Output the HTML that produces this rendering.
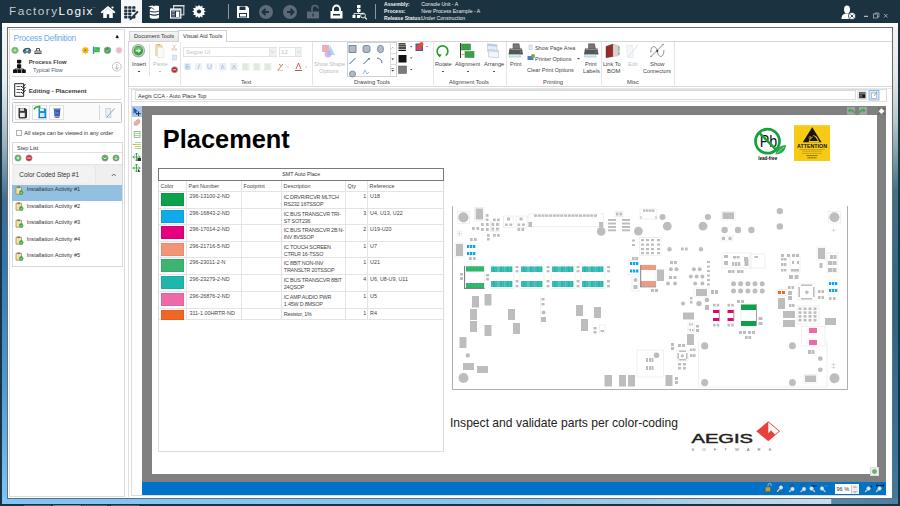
<!DOCTYPE html>
<html><head><meta charset="utf-8">
<style>
*{box-sizing:border-box;margin:0;padding:0}
html,body{width:900px;height:506px;overflow:hidden;background:#1b3241;font-family:"Liberation Sans",sans-serif;color:#222}
.a{position:absolute}
.t{position:absolute;white-space:nowrap;line-height:1}
svg{position:absolute;overflow:visible}
</style></head><body>
<div class="a" style="left:0;top:0;width:900px;height:506px">

<!-- ===== TITLE BAR ===== -->
<div class="t" style="left:9px;top:6.3px;font-size:11.8px;letter-spacing:1.45px;color:#c4cad0">Factory<span style="color:#fff">Logix</span></div>
<div class="t" style="left:92px;top:7px;font-size:2.5px;color:#7a8794">TM</div>
<div class="a" style="left:121px;top:0;width:21px;height:23px;background:#f4f6f8"></div>

<!-- ===== WINDOW FRAME ===== -->
<div class="a" style="left:2px;top:23px;width:896px;height:481px;background:linear-gradient(to bottom,#f4f6f8 0%,#e8eef2 12%,#9ab4c4 25%,#3d6d92 37%,#2e78b5 50%,#4a9ad8 75%,#7cc6f8 100%)"></div>
<div class="a" style="left:893px;top:23px;width:5px;height:481px;background:linear-gradient(to bottom,#f6f6f6 0%,#e0e6e6 12%,#b8cccc 20%,#3f7288 35%,#2a6585 60%,#3b7ca4 100%)"></div>
<div class="a" style="left:2px;top:498px;width:896px;height:6px;background:linear-gradient(to right,#7dc6f8 0%,#84c6f2 50%,#9ccbe8 70%,#c4def0 92.5%,#5589aa 92.6%,#4a80a3 100%)"></div>
<div class="a" style="left:2px;top:23px;width:896px;height:4px;background:#fff"></div>
<div class="a" style="left:24px;top:505px;width:27px;height:1px;background:#55606a"></div>
<div class="a" style="left:53px;top:505px;width:28px;height:1px;background:#7a858f"></div>
<div class="a" style="left:82px;top:505px;width:25px;height:1px;background:#55606a"></div>
<div class="a" style="left:111px;top:505px;width:28px;height:1px;background:#55606a"></div>
<!-- inner content -->
<div class="a" style="left:7px;top:27px;width:886px;height:472px;background:#fff;border:1px solid #6b6b6b"></div>


<!-- ===== LEFT PANEL ===== -->
<div class="a" style="left:9px;top:29px;width:116px;height:468px;border:1px solid #dcdcdc;background:#fff"></div>
<div class="a" style="left:127.5px;top:41px;width:1px;height:456px;background:#e0e0e0"></div>
<div class="t" style="left:13.6px;top:34px;font-size:8.3px;letter-spacing:-0.25px;color:#6aaae6">Process Definition</div>
<svg style="left:115px;top:34.5px" width="5" height="5"><path d="M1.2 0.6h2v1.8h0.8v0.7H0.4v-0.7h0.8z" fill="#111"/><path d="M2.2 3.1v1.2" stroke="#666" stroke-width="0.5"/></svg>
<!-- icon row -->
<svg style="left:11px;top:46px" width="115" height="9">
 <circle cx="4" cy="4.3" r="3.3" fill="#62b862" stroke="#b8b8b8" stroke-width="0.8"/><path d="M2.2 4.3h3.6M4 2.5v3.6" stroke="#d8f0d8" stroke-width="0.8"/>
 <path d="M12.5 5.5c0-2 2-3 3.5-2.5M16 3c1.5-1 3.5 0 3.5 2" stroke="#3a4a5a" stroke-width="1.5" fill="none"/><circle cx="14" cy="5.8" r="1.5" fill="#4a8ac8" stroke="#2a3a4a" stroke-width="0.6"/><circle cx="18" cy="5.8" r="1.5" fill="#4a8ac8" stroke="#2a3a4a" stroke-width="0.6"/>
 <path d="M23.5 7.5h7M24 7.5v-2.5h6v2.5M25.5 5v-2.5h3v2.5" stroke="#555" stroke-width="1" fill="none"/><rect x="24.5" y="5.5" width="5" height="1.5" fill="#aaa"/>
 <polygon points="78.10,4.30 76.89,5.37 76.99,6.99 75.37,6.89 74.30,8.10 73.23,6.89 71.61,6.99 71.71,5.37 70.50,4.30 71.71,3.23 71.61,1.61 73.23,1.71 74.30,0.50 75.37,1.71 76.99,1.61 76.89,3.23" fill="#f2b818"/><circle cx="74.3" cy="4.3" r="0.9" fill="#a07010"/>
 <path d="M82.5 0.5v7.5" stroke="#5a7ac8" stroke-width="1.3"/><path d="M83.2 1.2h5.5v5h-5.5z" fill="#2ab84a"/><path d="M83.5 2.5l4 2.5" stroke="#9f9" stroke-width="0.5"/>
 <circle cx="96.5" cy="4.3" r="3.3" fill="#3aa050" stroke="#a0a0a0" stroke-width="0.9"/><path d="M95 4.3l1.2 1.2 2-2.2" stroke="#cfc" stroke-width="0.7" fill="none"/>
 <circle cx="108" cy="4.3" r="3.1" fill="#f4b8c4" stroke="#e4e4e4" stroke-width="0.8"/>
</svg>
<!-- process flow -->
<svg style="left:13px;top:59px" width="14" height="15">
 <rect x="4" y="0.7" width="4.2" height="3.6" rx="0.5" fill="#111"/><rect x="4" y="5.3" width="4.2" height="3.6" rx="0.5" fill="#111"/>
 <path d="M6.1 4v1.5M6.1 8.8v1.5M2 11.2v-1.2h8.5v1.2" stroke="#111" stroke-width="0.9" fill="none"/>
 <rect x="0" y="10.4" width="4" height="3.6" rx="0.5" fill="#111"/><rect x="4.3" y="10.4" width="4" height="3.6" rx="0.5" fill="#111"/><rect x="8.8" y="10.4" width="4" height="3.6" rx="0.5" fill="#111"/>
</svg>
<div class="t" style="left:28.7px;top:60px;font-size:5.9px;font-weight:bold;color:#3a3a3a">Process Flow</div>
<div class="t" style="left:33px;top:68px;font-size:5.4px;color:#4a5a70">Typical Flow</div>
<svg style="left:111px;top:60.5px" width="12" height="12"><circle cx="5.8" cy="5.7" r="4.4" fill="none" stroke="#b0b0b0" stroke-width="0.75"/><path d="M5.8 3v5M3.7 6.5l2.1 1.8 2.1-1.8" stroke="#a0a0a0" stroke-width="0.75" fill="none"/></svg>
<div class="a" style="left:12px;top:76px;width:109px;height:1px;background:#d8d8d8"></div>
<!-- editing -->
<svg style="left:14px;top:83px" width="13" height="14">
 <path d="M0.7 0.7h9v12.6h-9z" fill="#fff" stroke="#222" stroke-width="1"/>
 <path d="M2.5 3.5h4M2.5 6.5h4M2.5 9.5h4" stroke="#333" stroke-width="0.8"/>
 <path d="M7 3l1.5 1.5 3-3.5M7 6l1.5 1.5 3-3.5M7 9l1.5 1.5 3-3.5" stroke="#111" stroke-width="1" fill="none"/>
</svg>
<div class="t" style="left:28.7px;top:87.7px;font-size:6.25px;font-weight:bold;color:#3a3a3a">Editing - Placement</div>
<div class="a" style="left:12px;top:99px;width:109px;height:1px;background:#d8d8d8"></div>
<!-- editing toolbar -->
<div class="a" style="left:11.5px;top:102px;width:110.5px;height:21px;border:1px solid #c4c4c4;border-radius:1.5px;background:#fafafa"></div>
<div class="a" style="left:15px;top:105px;width:15px;height:15px;border:1px solid #e2e2e2;background:#fff"></div>
<div class="a" style="left:32px;top:105px;width:15px;height:15px;border:1px solid #e2e2e2;background:#fff"></div>
<div class="a" style="left:49px;top:105px;width:15px;height:15px;border:1px solid #e2e2e2;background:#fff"></div>
<div class="a" style="left:99px;top:105px;width:1px;height:15px;background:#d8d8d8"></div>
<svg style="left:15px;top:105px" width="110" height="16">
 <path d="M3.5 3h6.5l1.5 1.2v8.5l-1 0.8H4.5l-1-1z" fill="#3a3a3a"/><rect x="5" y="3.3" width="4" height="2.6" fill="#d8d8d8"/><rect x="5" y="7.8" width="4.8" height="4.3" fill="#eee"/><path d="M11.5 4.2v8.5" stroke="#111" stroke-width="0.8"/>
 <path d="M23.5 3.2h6.5l1.2 1.2v8.5h-7.7z" fill="#1a8ad0"/><rect x="25" y="3.5" width="4" height="2.6" fill="#dff0fa"/><rect x="25" y="8" width="4.5" height="4" fill="#cfe6f4"/><path d="M23.5 12.9h7.7" stroke="#0a5a90" stroke-width="0.6"/>
 <path d="M19 4.5c1-2 3-3 5.5-2.5" stroke="#28a040" stroke-width="1.5" fill="none"/><path d="M23.8 0.3l2.2 1.8-2.2 1.8z" fill="#28a040"/>
 <path d="M38.8 3.5h6.6l-0.7 8.6c-0.3 0.6-1.5 0.9-2.6 0.9s-2.3-0.3-2.6-0.9z" fill="#3a5ab8"/><path d="M38.3 3.2h7.6v1.2h-7.6z" fill="#a8b0b8"/><path d="M40 6l1 3 1.5-2 1 2.5" stroke="#8ab0f0" stroke-width="0.5" fill="none"/><path d="M39.2 11.5h5.8" stroke="#b8c0c8" stroke-width="0.8"/>
 <path d="M90.5 3.5h5l0.5 9h-5z" fill="#e8f0f6" stroke="#9ab0c0" stroke-width="0.5"/><path d="M92 12l7.5-8.5" stroke="#8a9aa8" stroke-width="0.9"/>
</svg>
<!-- checkbox -->
<div class="a" style="left:16.3px;top:129.7px;width:6px;height:6px;border:1px solid #b0b0b0;background:#fff"></div>
<div class="t" style="left:24.3px;top:130.5px;font-size:5.55px;color:#333">All steps can be viewed in any order</div>
<!-- step list -->
<div class="a" style="left:11.5px;top:142px;width:111px;height:125px;border:1px solid #d8d8d8;background:#fff"></div>
<div class="t" style="left:17px;top:145.5px;font-size:5.5px;color:#333">Step List</div>
<div class="a" style="left:12px;top:152px;width:110px;height:1px;background:#e0e0e0"></div>
<svg style="left:14px;top:154px" width="108" height="9">
 <circle cx="4" cy="4" r="3.1" fill="#4caf50" stroke="#999" stroke-width="0.8"/><path d="M2.3 4h3.4M4 2.3v3.4" stroke="#fff" stroke-width="0.9"/>
 <circle cx="15" cy="4" r="3.1" fill="#d9243a" stroke="#999" stroke-width="0.8"/><path d="M13.3 4h3.4" stroke="#fff" stroke-width="0.9"/>
 <circle cx="91" cy="4" r="3.1" fill="#4caf50" stroke="#999" stroke-width="0.8"/><path d="M89.5 3.3l1.5 1.7 1.5-1.7" stroke="#fff" stroke-width="0.9" fill="none"/>
 <circle cx="102" cy="4" r="3.1" fill="#4caf50" stroke="#999" stroke-width="0.8"/><path d="M102 2.3v3M100.6 4.2l1.4 1.4 1.4-1.4" stroke="#fff" stroke-width="0.8" fill="none"/>
</svg>
<div class="a" style="left:12px;top:163.5px;width:110px;height:1px;background:#e4e4e4"></div>
<div class="a" style="left:12px;top:164.5px;width:110px;height:20px;background:#efefef"></div>
<div class="a" style="left:14px;top:166px;width:82px;height:16.5px;background:#f2f2f2;border-right:1px solid #e6e6e6"></div>
<div class="t" style="left:19.3px;top:171.5px;font-size:6.4px;color:#333">Color Coded Step #1</div>
<svg style="left:111px;top:173px" width="6" height="4"><path d="M0.8 3l2-2 2 2" stroke="#444" stroke-width="0.8" fill="none"/></svg>
<div class="a" style="left:12px;top:184.5px;width:110px;height:16.5px;background:#92c0e0"></div>
<svg style="left:14.5px;top:185.8px" width="9" height="9"><path d="M1 1.2h5.5v7H1z" fill="#f3e2b0" stroke="#a08040" stroke-width="0.7"/><rect x="2.4" y="0.5" width="2.6" height="1.6" fill="#777"/><circle cx="6.2" cy="6.5" r="2.2" fill="#3aa53a"/><path d="M5 6.5l.9.9 1.5-1.7" stroke="#fff" stroke-width="0.6" fill="none"/></svg>
<div class="t" style="left:26.7px;top:187.0px;font-size:5.6px;color:#333">Installation Activity #1</div>
<svg style="left:14.5px;top:202.4px" width="9" height="9"><path d="M1 1.2h5.5v7H1z" fill="#f3e2b0" stroke="#a08040" stroke-width="0.7"/><rect x="2.4" y="0.5" width="2.6" height="1.6" fill="#777"/><circle cx="6.2" cy="6.5" r="2.2" fill="#3aa53a"/><path d="M5 6.5l.9.9 1.5-1.7" stroke="#fff" stroke-width="0.6" fill="none"/></svg>
<div class="t" style="left:26.7px;top:203.6px;font-size:5.6px;color:#333">Installation Activity #2</div>
<svg style="left:14.5px;top:219.0px" width="9" height="9"><path d="M1 1.2h5.5v7H1z" fill="#f3e2b0" stroke="#a08040" stroke-width="0.7"/><rect x="2.4" y="0.5" width="2.6" height="1.6" fill="#777"/><circle cx="6.2" cy="6.5" r="2.2" fill="#3aa53a"/><path d="M5 6.5l.9.9 1.5-1.7" stroke="#fff" stroke-width="0.6" fill="none"/></svg>
<div class="t" style="left:26.7px;top:220.2px;font-size:5.6px;color:#333">Installation Activity #3</div>
<svg style="left:14.5px;top:235.6px" width="9" height="9"><path d="M1 1.2h5.5v7H1z" fill="#f3e2b0" stroke="#a08040" stroke-width="0.7"/><rect x="2.4" y="0.5" width="2.6" height="1.6" fill="#777"/><circle cx="6.2" cy="6.5" r="2.2" fill="#3aa53a"/><path d="M5 6.5l.9.9 1.5-1.7" stroke="#fff" stroke-width="0.6" fill="none"/></svg>
<div class="t" style="left:26.7px;top:236.8px;font-size:5.6px;color:#333">Installation Activity #4</div>
<svg style="left:14.5px;top:252.2px" width="9" height="9"><path d="M1 1.2h5.5v7H1z" fill="#f3e2b0" stroke="#a08040" stroke-width="0.7"/><rect x="2.4" y="0.5" width="2.6" height="1.6" fill="#777"/><circle cx="6.2" cy="6.5" r="2.2" fill="#3aa53a"/><path d="M5 6.5l.9.9 1.5-1.7" stroke="#fff" stroke-width="0.6" fill="none"/></svg>
<div class="t" style="left:26.7px;top:253.4px;font-size:5.6px;color:#333">Installation Activity #5</div>

<!-- ===== RIBBON ===== -->
<div class="a" style="left:129px;top:31px;width:49.5px;height:10.5px;border:1px solid #d4d4d4;border-bottom:none;background:linear-gradient(#f4f4f4,#e6e6e6)"></div>
<div class="t" style="left:134px;top:33.4px;font-size:6.2px;transform:scaleX(0.906);transform-origin:0 0;color:#333">Document Tools</div>
<div class="a" style="left:128px;top:41px;width:764px;height:46px;border:1px solid #d6d6d6;border-right:none;background:#fff"></div>
<div class="a" style="left:178px;top:30px;width:49px;height:12px;border:1px solid #d0d0d0;border-bottom:none;background:#fff"></div>
<div class="t" style="left:182.9px;top:33.4px;font-size:6.2px;transform:scaleX(0.909);transform-origin:0 0;color:#333">Visual Aid Tools</div>
<div class="a" style="left:128px;top:86px;width:764px;height:1px;background:#d9d9d9"></div>
<div class="a" style="left:128px;top:88px;width:764px;height:1px;background:#e6e6e6"></div>
<!-- separators -->
<div class="a" style="left:149px;top:44px;width:1px;height:32px;background:#e4e4e4"></div>
<div class="a" style="left:180px;top:42px;width:1px;height:43px;background:#e4e4e4"></div>
<div class="a" style="left:311.5px;top:42px;width:1px;height:43px;background:#e4e4e4"></div>
<div class="a" style="left:432.5px;top:42px;width:1px;height:43px;background:#e4e4e4"></div>
<div class="a" style="left:505.5px;top:42px;width:1px;height:43px;background:#e4e4e4"></div>
<div class="a" style="left:601px;top:42px;width:1px;height:43px;background:#e4e4e4"></div>
<div class="a" style="left:674px;top:42px;width:1px;height:43px;background:#e4e4e4"></div>
<!-- Insert / Paste -->
<svg style="left:131px;top:44px" width="50" height="30">
 <circle cx="7.4" cy="6.7" r="6.7" fill="#a4a4a4"/><circle cx="7.4" cy="6.7" r="5.9" fill="#c8c8c8"/><circle cx="7.4" cy="6.7" r="4.7" fill="#2fa83a"/><ellipse cx="7.4" cy="5" rx="3.2" ry="2" fill="#78d478" opacity="0.7"/>
 <path d="M4.6 6.8h3.2" stroke="#fff" stroke-width="1.3"/><path d="M7.3 4.6l2.8 2.2-2.8 2.2z" fill="#fff"/>
 <path d="M24.5 0.5h5.5l1.5 1.5v10h-7z" fill="#f0dca0" stroke="#e0c888" stroke-width="0.4"/><rect x="26" y="0" width="3" height="1.5" fill="#c8b8a0"/>
 <path d="M26.5 3.5h5.5l1 1v9h-6.5z" fill="#fafafa" stroke="#d8d8d8" stroke-width="0.5"/>
 <path d="M41.8 0.5l2.5 4M44.8 0.5l-2.5 4" stroke="#c8a0a0" stroke-width="0.5"/><circle cx="41.8" cy="5.5" r="0.9" fill="none" stroke="#d88" stroke-width="0.5"/><circle cx="44.8" cy="5.5" r="0.9" fill="none" stroke="#d88" stroke-width="0.5"/>
 <rect x="41.5" y="11" width="4" height="5" fill="#dde8f4" stroke="#b8cce0" stroke-width="0.5"/>
 <circle cx="43.5" cy="25.8" r="3" fill="#c8202f" stroke="#a0a0a0" stroke-width="0.9"/><path d="M42 25.8h3" stroke="#fff" stroke-width="0.8"/>
</svg>
<div class="t" style="left:132px;top:60.5px;font-size:6.2px;transform:scaleX(0.903);transform-origin:0 0;color:#333">Insert</div>
<div class="a" style="left:137.5px;top:70.5px;width:2px;height:1.5px;background:#444"></div>
<div class="t" style="left:153px;top:60.5px;font-size:6.2px;transform:scaleX(0.924);transform-origin:0 0;color:#bbb">Paste</div>
<div class="a" style="left:158.5px;top:70.5px;width:2px;height:1px;background:#bbb"></div>
<!-- Text group -->
<div class="a" style="left:183.3px;top:47.3px;width:93.7px;height:9.5px;border:1px solid #e2e2e2;background:#fff"></div>
<div class="a" style="left:268.5px;top:48px;width:8px;height:8px;background:#f0f0f0;border-left:1px solid #e6e6e6"></div>
<svg style="left:270px;top:50px" width="6" height="4"><path d="M0.8 0.8l2 2 2-2" stroke="#bbb" stroke-width="0.6" fill="none"/></svg>
<div class="t" style="left:185.5px;top:48.6px;font-size:6.2px;transform:scaleX(0.945);transform-origin:0 0;color:#c4c4c4">Segoe UI</div>
<div class="a" style="left:279px;top:47.3px;width:23px;height:9.5px;border:1px solid #e2e2e2;background:#fff"></div>
<div class="a" style="left:294.5px;top:48px;width:7px;height:8px;background:#f0f0f0;border-left:1px solid #e6e6e6"></div>
<svg style="left:295.5px;top:50px" width="6" height="4"><path d="M0.8 0.8l2 2 2-2" stroke="#c8c8c8" stroke-width="0.6" fill="none"/></svg>
<div class="t" style="left:281px;top:48.6px;font-size:6.2px;color:#c4c4c4">12</div>
<svg style="left:183px;top:62px" width="130" height="10">
 <rect x="1" y="1" width="7" height="7" fill="#e8f0f8"/><rect x="12" y="1" width="7" height="7" fill="#eef2f8"/><rect x="23" y="1" width="7" height="7" fill="#eef2f8"/>
 <path d="M3 2.5h2.5a1.2 1.2 0 010 2.2H3zM3 4.7h2.8a1.3 1.3 0 010 2.3H3z" stroke="#8fb0e0" stroke-width="0.6" fill="none"/>
 <path d="M16.5 2.5l-1.6 4.5" stroke="#8fb0e0" stroke-width="0.7"/><path d="M24.8 2.5v2.5a1.7 1.7 0 003.4 0v-2.5" stroke="#8fb0e0" stroke-width="0.7" fill="none"/>
 <path d="M33 1v7" stroke="#ddd" stroke-width="0.6"/>
 <rect x="36" y="1" width="7.5" height="7.5" fill="#e8eef6"/><rect x="47" y="1" width="7.5" height="7.5" fill="#e8eef6"/>
 <path d="M38 7l1.5-4 1.5 4" stroke="#aab" stroke-width="0.6" fill="none"/><path d="M49.5 7l1.5-4 1.5 4" stroke="#aab" stroke-width="0.6" fill="none"/>
 <rect x="59" y="1" width="7.5" height="7.5" fill="#eaf2e8"/><rect x="70" y="1" width="7.5" height="7.5" fill="#eaf2e8"/><rect x="81" y="1" width="7.5" height="7.5" fill="#eaf2e8"/>
 <path d="M60 3h5M60 5h4M60 7h5M71 3h5M72 5h3M71 7h5M82 3h5M83 5h4M82 7h5" stroke="#c8d8c0" stroke-width="0.6"/>
 <path d="M95 8l5-6M96 2l2 1.5" stroke="#e66" stroke-width="1"/><path d="M94 8.5h6" stroke="#aaa" stroke-width="0.6"/><path d="M104 5h2" stroke="#999" stroke-width="0.5"/>
 <path d="M113 7l2.5-6 2.5 6" stroke="#d33" stroke-width="0.8" fill="none"/><path d="M112 8.5h7" stroke="#777" stroke-width="1"/><path d="M122 5h2" stroke="#999" stroke-width="0.5"/>
</svg>
<div class="t" style="left:240.7px;top:79.4px;font-size:6.2px;transform:scaleX(0.920);transform-origin:0 0;color:#444">Text</div>
<!-- Show shape options -->
<svg style="left:321px;top:44px" width="16" height="14">
 <rect x="1" y="1" width="7" height="7" fill="#e88a9a" opacity="0.7"/><path d="M9 1l5 10h-8z" fill="#8ed4f0" opacity="0.8"/><circle cx="7" cy="10" r="3.5" fill="#c8a8e8" opacity="0.8"/>
</svg>
<div class="t" style="left:314px;top:61px;font-size:6.2px;transform:scaleX(0.885);transform-origin:0 0;color:#bbb">Show Shape</div>
<div class="t" style="left:318.5px;top:68.3px;font-size:6.2px;transform:scaleX(0.916);transform-origin:0 0;color:#bbb">Options</div>
<!-- Drawing tools gallery -->
<div class="a" style="left:346.5px;top:42px;width:50.5px;height:34.5px;border:1px solid #d0d0d0;background:#fff"></div>
<div class="a" style="left:389.5px;top:42px;width:1px;height:34px;background:#ddd"></div>
<div class="a" style="left:390px;top:53px;width:7px;height:1px;background:#ddd"></div>
<div class="a" style="left:390px;top:64px;width:7px;height:1px;background:#ddd"></div>
<svg style="left:347px;top:43px" width="60" height="34">
 <rect x="2" y="2.5" width="7" height="7" fill="#b9b9b9" stroke="#4a78b8" stroke-width="0.8"/>
 <rect x="16" y="2.5" width="7" height="7" rx="2" fill="#b9b9b9" stroke="#4a78b8" stroke-width="0.8"/>
 <ellipse cx="33.5" cy="6" rx="3" ry="3.8" fill="#b9b9b9" stroke="#4a78b8" stroke-width="0.7"/>
 <path d="M2.5 21l6-6" stroke="#2f62a8" stroke-width="1"/>
 <path d="M16.5 21l6-6" stroke="#2f62a8" stroke-width="1"/><path d="M21 16l2.2-1.2-1 2.2z" fill="#2f62a8"/>
 <path d="M30 15c2.5 0 5 2 5 5" stroke="#2f62a8" stroke-width="0.9" fill="none"/>
 <circle cx="5.5" cy="31" r="3" fill="#b9b9b9" stroke="#4a78b8" stroke-width="0.7"/>
 <path d="M16 31l2-4 2 4 2-2" stroke="#5a8ac8" stroke-width="0.6" fill="none"/>
 <path d="M44.5 5.5l1.2-1.2 1.2 1.2" stroke="#666" stroke-width="0.5" fill="none"/>
 <path d="M44.3 15.5h2.8l-1.4 1.6z" fill="#333"/><path d="M44.3 27h2.8l-1.4 1.6z" fill="#333"/><path d="M44.3 25.5h2.8" stroke="#333" stroke-width="0.5"/>
 <path d="M51.5 0.8h7M51.5 2.8h7.5M51.5 5h7.5M51.5 7.3h7.5" stroke="#111" stroke-width="1.3"/>
 <rect x="51.5" y="12" width="8" height="7.5" fill="#111"/><rect x="51.5" y="23" width="8" height="7.5" fill="#7a7a7a" stroke="#555" stroke-width="0.5"/>
</svg>
<svg style="left:410px;top:46px" width="20" height="30">
 <path d="M0 0.2h2.4l-1.2 1.3z" fill="#333"/><path d="M0 11.5h2.4l-1.2 1.3z" fill="#333"/><path d="M0 23h2.4l-1.2 1.3z" fill="#333"/>
 <rect x="5.5" y="-2.5" width="7.5" height="7.5" fill="#2f5fb8"/><rect x="6.5" y="-1.5" width="5.5" height="5.5" fill="#e04a3a"/><circle cx="11.5" cy="-2" r="2" fill="#e8503a"/>
 <path d="M16 0h2l-1 1z" fill="#444"/>
</svg>
<div class="t" style="left:354px;top:79.4px;font-size:6.2px;transform:scaleX(0.929);transform-origin:0 0;color:#444">Drawing Tools</div>
<!-- Alignment tools -->
<svg style="left:435px;top:43px" width="70" height="16">
 <path d="M10.8 12.6A5.4 5.4 0 1 0 4.2 12.6" stroke="#2aa02a" stroke-width="1.7" fill="none"/><path d="M2.2 11l2.4 3.6 2.2-3z" fill="#2aa02a"/>
 <path d="M25.5 0v15" stroke="#333" stroke-width="1"/><rect x="26.5" y="1" width="9" height="6" fill="#3aa04a" stroke="#2a7a3a" stroke-width="0.5"/><rect x="30" y="8.5" width="9" height="6" fill="#3aa04a" stroke="#2a7a3a" stroke-width="0.5"/>
 <path d="M26.5 11.5h3" stroke="#f0a020" stroke-width="1.2"/>
 <path d="M52.5 0.8l9.5 1v7.5l-9.5-1z" fill="#e4eef6" stroke="#a8b8c8" stroke-width="0.5"/><path d="M52.5 0.8l9.5 1v2l-9.5-1z" fill="#b8cce0"/><path d="M53.5 6.5l10 0.8v7.5l-10-0.8z" fill="#f0f6fa" stroke="#a8b8c8" stroke-width="0.5"/><path d="M53.5 6.5l10 0.8v2l-10-0.8z" fill="#c8d8e8"/>
</svg>
<div class="t" style="left:435px;top:60.5px;font-size:6.2px;transform:scaleX(0.918);transform-origin:0 0;color:#444">Rotate</div>
<div class="t" style="left:455.2px;top:60.5px;font-size:6.2px;transform:scaleX(0.913);transform-origin:0 0;color:#444">Alignment</div>
<div class="t" style="left:484px;top:60.5px;font-size:6.2px;transform:scaleX(0.919);transform-origin:0 0;color:#444">Arrange</div>
<div class="a" style="left:442px;top:70.5px;width:2px;height:1px;background:#555"></div>
<div class="a" style="left:466.5px;top:70.5px;width:2px;height:1px;background:#555"></div>
<div class="a" style="left:493px;top:70.5px;width:2px;height:1px;background:#555"></div>
<div class="t" style="left:449px;top:79.4px;font-size:6.2px;transform:scaleX(0.916);transform-origin:0 0;color:#444">Alignment Tools</div>
<!-- Printing -->
<svg style="left:508px;top:43px" width="95" height="16">
 <path d="M5 0.8h6l1 5H5z" fill="#777" stroke="#444" stroke-width="0.5"/><path d="M1.5 5.5h12.5l1 6H0.5z" fill="#555"/><path d="M2.5 6.5h11" stroke="#999" stroke-width="0.8"/><path d="M1.5 11.5h10l1.5 2.5H1z" fill="#d8ecf4" stroke="#8aa" stroke-width="0.5"/><circle cx="12.5" cy="9" r="0.8" fill="#4a8ad0"/>
 <rect x="21" y="2" width="3" height="4.5" fill="#e8f0fa" stroke="#9ab8d8" stroke-width="0.5"/>
 <rect x="19.5" y="13" width="6" height="4" fill="#5a7ab8"/><circle cx="25" cy="13" r="2" fill="#5ab850"/>
 <g transform="translate(75.5,0)"><path d="M5 0.8h6l1 5H5z" fill="#777" stroke="#444" stroke-width="0.5"/><path d="M1.5 5.5h12.5l1 6H0.5z" fill="#555"/><path d="M2.5 6.5h11" stroke="#999" stroke-width="0.8"/><path d="M1.5 11.5h10l1.5 2.5H1z" fill="#d8ecf4" stroke="#8aa" stroke-width="0.5"/><circle cx="12.5" cy="9" r="0.8" fill="#4a8ad0"/></g>
</svg>
<div class="t" style="left:510px;top:60.6px;font-size:6.2px;transform:scaleX(0.906);transform-origin:0 0;color:#444">Print</div>
<div class="t" style="left:535px;top:44.75px;font-size:6.2px;transform:scaleX(0.873);transform-origin:0 0;color:#444">Show Page Area</div>
<div class="t" style="left:535.2px;top:55.85px;font-size:6.2px;transform:scaleX(0.881);transform-origin:0 0;color:#444">Printer Options</div>
<svg style="left:577px;top:58px" width="4" height="3"><path d="M0 0h3l-1.5 1.5z" fill="#444"/></svg>
<div class="t" style="left:527px;top:66.95px;font-size:6.2px;transform:scaleX(0.897);transform-origin:0 0;color:#444">Clear Print Options</div>
<div class="t" style="left:584.5px;top:60.7px;font-size:6.2px;transform:scaleX(0.906);transform-origin:0 0;color:#444">Print</div>
<div class="t" style="left:583px;top:68.45px;font-size:6.2px;transform:scaleX(0.918);transform-origin:0 0;color:#444">Labels</div>
<div class="t" style="left:543px;top:79.4px;font-size:6.2px;transform:scaleX(0.954);transform-origin:0 0;color:#444">Printing</div>
<!-- Misc -->
<svg style="left:600px;top:40px" width="70" height="20">
 <path d="M6 6.5l7-2.5v12.5l-7 1.2z" fill="#9a2a2a" stroke="#6a1a1a" stroke-width="0.4"/>
 <path d="M13 4l5.5 1.5v10.5l-5.5 0.5z" fill="#d4d4d4" stroke="#aaa" stroke-width="0.3"/>
 <path d="M19 6.5v2" stroke="#d03030" stroke-width="0.9"/>
 <path d="M19 8.7v2" stroke="#30a040" stroke-width="0.9"/><path d="M19 10.9v1.8" stroke="#e09020" stroke-width="0.9"/><path d="M19 12.9v1.8" stroke="#3050d0" stroke-width="0.9"/>
 <path d="M26.5 5.5h6l1 12h-6z" fill="#f4f8fb" stroke="#d8e0e8" stroke-width="0.5"/><path d="M28 17l10-12" stroke="#dde2e6" stroke-width="1"/>
 <path d="M51 16.5L63 4.5" stroke="#666" stroke-width="0.8"/>
 <path d="M50.8 11.5c0-3 1.5-5 3-5s3 2 3.5 5c0.5 3 2 5 3.5 5s3-2 3-5" stroke="#777" stroke-width="0.8" fill="none"/>
 <circle cx="57.3" cy="11" r="1.1" fill="#333"/>
 <circle cx="50.8" cy="11.8" r="0.8" fill="#999"/><circle cx="63.8" cy="11" r="0.8" fill="#999"/>
 <circle cx="51" cy="16.5" r="0.8" fill="#888"/><circle cx="63" cy="4.5" r="0.8" fill="#888"/>
</svg>
<div class="t" style="left:603px;top:60.7px;font-size:6.2px;transform:scaleX(0.908);transform-origin:0 0;color:#444">Link To</div>
<div class="t" style="left:606.5px;top:68.45px;font-size:6.2px;transform:scaleX(0.957);transform-origin:0 0;color:#444">BOM</div>
<div class="t" style="left:628px;top:60.7px;font-size:6.2px;transform:scaleX(0.915);transform-origin:0 0;color:#c4c4c4">Edit</div>
<div class="t" style="left:650px;top:60.7px;font-size:6.2px;transform:scaleX(0.942);transform-origin:0 0;color:#444">Show</div>
<div class="t" style="left:643px;top:68.45px;font-size:6.2px;transform:scaleX(0.886);transform-origin:0 0;color:#444">Connectors</div>
<div class="t" style="left:627px;top:79.4px;font-size:6.2px;transform:scaleX(0.930);transform-origin:0 0;color:#444">Misc</div>

<!-- ===== DOC PANEL ===== -->
<div class="a" style="left:130.5px;top:88.5px;width:756px;height:407px;border:1px solid #dcdcdc;border-right:none;background:#fff"></div>
<div class="a" style="left:130.5px;top:88.5px;width:756px;height:13px;border:1px solid #dcdcdc;border-bottom:none"></div>
<div class="a" style="left:135.3px;top:90px;width:720.7px;height:10px;border:1px solid #dcdcdc;background:#fff"></div>
<div class="t" style="left:138px;top:92.5px;font-size:6.2px;transform:scaleX(0.892);transform-origin:0 0;color:#333">Aegis CCA - Auto Place Top</div>
<div class="a" style="left:131px;top:101px;width:755px;height:1px;background:#e2e2e2"></div>
<svg style="left:857px;top:90px" width="25" height="11">
 <rect x="0.8" y="0.3" width="9" height="9.5" fill="#e8e8e8" stroke="#d8d8d8" stroke-width="0.5"/>
 <rect x="2" y="2.2" width="6.5" height="6" fill="#444"/><path d="M2.5 3.5h5.5M2.5 5.8h2.5" stroke="#999" stroke-width="0.6"/><rect x="5.5" y="5" width="2.5" height="2.5" fill="#111"/>
 <rect x="12" y="0.5" width="10" height="9.5" fill="#d4e6f8" stroke="#7ab0e0" stroke-width="0.8"/>
 <rect x="14.5" y="3" width="5" height="5.5" fill="#fff" stroke="#889" stroke-width="0.5"/><path d="M17 6l3-4" stroke="#666" stroke-width="0.6"/>
</svg>
<!-- left toolbox -->
<div class="a" style="left:131.5px;top:106px;width:10px;height:10.5px;background:#a6c8ec"></div>
<svg style="left:132px;top:106px" width="10" height="68">
 <path d="M1.5 1.5l4.5 3.8-2.2 0.4 1.6 2.4-1 0.6-1.5-2.4-1.4 1.5z" fill="#2050a8"/><path d="M6.5 5.5v4.5M4.3 7.7h4.5" stroke="#222" stroke-width="0.9"/>
 <ellipse cx="5" cy="16.5" rx="2.2" ry="3.6" transform="rotate(45 5 16.5)" fill="#e8b0a0" stroke="#c89080" stroke-width="0.4"/>
 <rect x="2.2" y="25.5" width="5.8" height="6" fill="none" stroke="#6cc06c" stroke-width="0.8"/><path d="M2.2 27.5h5.8M2.2 29.5h5.8" stroke="#6cc06c" stroke-width="0.6"/>
 <path d="M3 36.5h6M3 38.5h6M3 40.5h6M3 42.5h6" stroke="#9cd060" stroke-width="0.8"/><path d="M0.8 38.5h2.5" stroke="#f0a030" stroke-width="1"/>
 <path d="M4.5 47v8M0.8 51h7.5M3 48.5l1.5-1.5 1.5 1.5M3 53.5l1.5 1.5 1.5-1.5M2.3 49.5l-1.5 1.5 1.5 1.5M6.7 49.5l1.5 1.5-1.5 1.5" stroke="#2a9a3a" stroke-width="0.8" fill="none"/><rect x="5.5" y="52" width="3.5" height="3" fill="#333"/>
 <path d="M4.5 58v8M0.8 62h7.5M3 59.5l1.5-1.5 1.5 1.5M3 64.5l1.5 1.5 1.5-1.5M2.3 60.5l-1.5 1.5 1.5 1.5M6.7 60.5l1.5 1.5-1.5 1.5" stroke="#2a9a3a" stroke-width="0.8" fill="none"/><path d="M6 63l2.5 2.5-2.5 0.5z" fill="#333"/>
</svg>
<!-- canvas -->
<div class="a" style="left:142.3px;top:105.6px;width:744px;height:376.7px;background:#808080"></div>
<div class="a" style="left:151.8px;top:114.6px;width:725.5px;height:359.2px;background:#fff"></div>
<svg style="left:846px;top:106px" width="40" height="12">
 <rect x="1" y="1" width="8" height="7.8" fill="#a4a4a4"/><rect x="13" y="1" width="8" height="7.8" fill="#a4a4a4"/>
 <path d="M3.5 4.3c2-0.5 4 0.3 4.8 3" stroke="#45a855" stroke-width="1.5" fill="none"/><path d="M1.5 4.5l3-2.3v4.6z" fill="#45a855"/>
 <path d="M18 4.3c-2-0.5-4 0.3-4.8 3" stroke="#45a855" stroke-width="1.5" fill="none"/><path d="M20 4.5l-3-2.3v4.6z" fill="#45a855"/>
 <rect x="33.5" y="3.2" width="4" height="4" fill="#fff" transform="rotate(45 35.5 5.2)"/><path d="M32.2 1.8l1.3 1.3M38.8 1.8l-1.3 1.3M32.2 8.6l1.3-1.3M38.8 8.6l-1.3-1.3" stroke="#222" stroke-width="0.7"/>
</svg>
<div class="a" style="left:870.2px;top:466.5px;width:8.6px;height:9px;background:#efefef;border:1px solid #ddd"></div>
<svg style="left:871px;top:467.5px" width="7" height="7"><circle cx="3.5" cy="3.5" r="2.2" fill="#5cb85c" stroke="#999" stroke-width="0.5"/></svg>
<!-- status bar -->
<div class="a" style="left:142.3px;top:482.3px;width:744px;height:12.3px;background:#0073c8"></div>
<svg style="left:760px;top:480px" width="130" height="15">
 <path d="M8 6.5v-1.5a1.6 1.6 0 013.2 0v1" stroke="#c8c8c8" stroke-width="0.8" fill="none"/><rect x="5.2" y="7" width="5.2" height="4.6" fill="#c89a30" stroke="#6a5020" stroke-width="0.4"/>
 <rect x="15.8" y="5" width="7.5" height="7.5" fill="none" stroke="#1a4a80" stroke-width="0.5" stroke-dasharray="0.8 0.8"/>
 <path d="M21 7.5L17.5 11.2" stroke="#e8c88a" stroke-width="1.3" stroke-linecap="round"/><circle cx="21" cy="7.5" r="1.9" fill="#dfe8f0" stroke="#9aa" stroke-width="0.4"/>
 <text x="29.5" y="6.8" font-family="Liberation Sans" font-size="2.6" fill="#333">100</text><path d="M32.5 9L29.5 11.5" stroke="#e8c88a" stroke-width="1.3" stroke-linecap="round"/><circle cx="32.5" cy="9" r="1.9" fill="#dfe8f0" stroke="#9aa" stroke-width="0.4"/>
 <text x="41" y="6.8" font-family="Liberation Sans" font-size="2.6" fill="#333">1:1</text><path d="M44 9L41 11.5" stroke="#e8c88a" stroke-width="1.3" stroke-linecap="round"/><circle cx="44" cy="9" r="1.9" fill="#dfe8f0" stroke="#9aa" stroke-width="0.4"/>
 <path d="M51 6h6" stroke="#111" stroke-width="0.9"/><path d="M51.5 8.5L54.5 11.5" stroke="#e8c88a" stroke-width="1.3" stroke-linecap="round"/><circle cx="51.5" cy="8.5" r="1.9" fill="#dfe8f0" stroke="#9aa" stroke-width="0.4"/>
 <path d="M64.5 6h3" stroke="#8aa" stroke-width="0.6"/><path d="M62 8.5L65 11.5" stroke="#e8c88a" stroke-width="1.3" stroke-linecap="round"/><circle cx="62" cy="8.5" r="1.9" fill="#dfe8f0" stroke="#9aa" stroke-width="0.4"/>
 <path d="M110 6.5h3M111.5 5v3" stroke="#334" stroke-width="0.7"/><path d="M108.5 8.5L105.5 11.5" stroke="#e8c88a" stroke-width="1.3" stroke-linecap="round"/><circle cx="108.5" cy="8.5" r="1.9" fill="#dfe8f0" stroke="#9aa" stroke-width="0.4"/>
 <path d="M116 5.5h8M117.3 4.3l-1.3 1.2 1.3 1.2M122.7 4.3l1.3 1.2-1.3 1.2" stroke="#111" stroke-width="0.8" fill="none"/><path d="M119.5 8.5L116.5 11.5" stroke="#e8c88a" stroke-width="1.3" stroke-linecap="round"/><circle cx="119.5" cy="8.5" r="1.9" fill="#dfe8f0" stroke="#9aa" stroke-width="0.4"/>
</svg>
<div class="a" style="left:835px;top:484px;width:24px;height:10px;background:#fff"></div>
<div class="t" style="left:836.5px;top:486.5px;font-size:5.6px;color:#333">96 %</div>
<div class="a" style="left:851px;top:484.5px;width:7px;height:9px;background:#eee;border-left:1px solid #ccc"></div>
<svg style="left:852px;top:485px" width="6" height="9"><path d="M1.5 3l1.5-1.5 1.5 1.5M1.5 6l1.5 1.5 1.5-1.5" stroke="#555" stroke-width="0.6" fill="none"/></svg>

<!-- ===== TITLE ICONS ===== -->
<svg style="left:100px;top:4px" width="120" height="16">
 <!-- home -->
 <path d="M1.8 8.2L8 3.2l6.3 5" stroke="#fff" stroke-width="1.8" fill="none" stroke-linecap="round"/><path d="M3.2 8v6h3.6v-3.8h2.4v3.8h3.6V8L8 4.5z" fill="#fff"/><circle cx="12.5" cy="3.5" r="1.1" fill="#fff"/>
 <!-- grid pen -->
 <rect x="24.2" y="2.2" width="3.2" height="2.6" rx="0.6" fill="#1b3241"/><rect x="24.2" y="5.4" width="3.2" height="2.6" rx="0.6" fill="#1b3241"/><rect x="24.2" y="8.6" width="3.2" height="2.6" rx="0.6" fill="#1b3241"/><rect x="24.2" y="11.8" width="3.2" height="2.6" rx="0.6" fill="#1b3241"/><rect x="28.2" y="2.2" width="3.2" height="2.6" rx="0.6" fill="#1b3241"/><rect x="28.2" y="5.4" width="3.2" height="2.6" rx="0.6" fill="#1b3241"/><rect x="28.2" y="8.6" width="3.2" height="2.6" rx="0.6" fill="#1b3241"/><rect x="28.2" y="11.8" width="3.2" height="2.6" rx="0.6" fill="#1b3241"/><rect x="32.2" y="2.2" width="3.2" height="2.6" rx="0.6" fill="#1b3241"/><rect x="32.2" y="5.4" width="3.2" height="2.6" rx="0.6" fill="#1b3241"/><rect x="32.2" y="11.8" width="3.2" height="2.6" rx="0.6" fill="#1b3241"/><path d="M30 14.5l7.2-7.8 1.4 1.3-7.2 7.8-1.8 0.5z" fill="#1b3241"/>
 <!-- database -->
 <g transform="translate(49,1)"><path d="M0.8 9.8c1.2 0.6 2.8 0.9 4.6 0.9s3.4-0.3 4.6-0.9v2.6c0 0.8-2 1.3-4.6 1.3s-4.6-0.5-4.6-1.3z" fill="#fff"/><path d="M0.8 6.6c1.2 0.6 2.8 0.9 4.6 0.9s3.4-0.3 4.6-0.9v2.2c-1.2 0.5-2.8 0.8-4.6 0.8s-3.4-0.3-4.6-0.8z" fill="#fff"/>
 <path d="M5.5 1c1.5-0.4 3-0.4 4.5 0v4.8c-1.2 0.5-2.8 0.8-4.6 0.8-1.5 0-3-0.3-4.6-0.8v-1.5z" fill="#fff"/><path d="M-0.8 1.2l4.8-0.8 0.8 1.3 1.6-1.5 0.3 4.2-2.6-1z" fill="#fff"/><path d="M1.8 2.2l3.6 2.3" stroke="#1b3241" stroke-width="0.7"/></g>
 <!-- windows -->
 <g transform="translate(70,1)"><rect x="3.6" y="0.6" width="10.2" height="9.2" fill="none" stroke="#c8ccd0" stroke-width="1.2"/><rect x="3" y="0" width="11.4" height="1.4" fill="#d8dcdf"/><rect x="0.6" y="4" width="10.2" height="9" fill="#1b3241" stroke="#fff" stroke-width="1.2"/><rect x="0.6" y="4" width="10.2" height="1.6" fill="#e0e3e6"/><path d="M2 6.5h3M2 8h3M2 9.5h3M2 11h3" stroke="#aab" stroke-width="0.8"/><rect x="6" y="6.5" width="3.3" height="5.5" fill="#fff"/></g>
 <!-- gear -->
 <polygon points="99.00,0.70 100.27,2.77 102.40,1.61 102.46,4.04 104.89,4.10 103.73,6.23 105.80,7.50 103.73,8.77 104.89,10.90 102.46,10.96 102.40,13.39 100.27,12.23 99.00,14.30 97.73,12.23 95.60,13.39 95.54,10.96 93.11,10.90 94.27,8.77 92.20,7.50 94.27,6.23 93.11,4.10 95.54,4.04 95.60,1.61 97.73,2.77" fill="#fff"/><circle cx="99" cy="7.5" r="4.9" fill="#fff"/><circle cx="99" cy="7.5" r="2.1" fill="#1b3241"/>
</svg>
<div class="a" style="left:227.5px;top:4px;width:1px;height:15px;background:#8a98a6"></div>
<div class="a" style="left:374.5px;top:4px;width:1px;height:15px;background:#8a98a6"></div>
<svg style="left:236px;top:5px" width="135" height="15">
 <!-- save -->
 <path d="M1 1h10l2 2v10H1z" fill="#fff"/><rect x="3.5" y="1.5" width="6" height="3.5" fill="#1b3241"/><rect x="3" y="8" width="8" height="4.5" fill="#1b3241"/><rect x="4" y="9" width="6" height="2.5" fill="#fff"/>
 <!-- back -->
 <circle cx="30" cy="7" r="7" fill="#5d6a77"/><path d="M27 7h6M29.5 4l-3 3 3 3" stroke="#1b3241" stroke-width="2" fill="none"/>
 <circle cx="54" cy="7" r="7" fill="#5d6a77"/><path d="M51 7h6M54.5 4l3 3-3 3" stroke="#1b3241" stroke-width="2" fill="none"/>
 <!-- unlock -->
 <path d="M76 6V3.5a3 3 0 016 0" stroke="#5d6a77" stroke-width="1.6" fill="none"/><rect x="71" y="6.5" width="12" height="7" fill="#5d6a77"/><rect x="76.5" y="8.5" width="1.2" height="3" fill="#1b3241"/>
 <!-- lock -->
 <path d="M97 6V4a3.5 3.5 0 017 0v2" stroke="#fff" stroke-width="1.8" fill="none"/><rect x="94.5" y="6" width="12" height="7.5" fill="#fff"/><rect x="97" y="9" width="7" height="1.5" fill="#1b3241"/>
 <!-- process search -->
 <rect x="121" y="0" width="3.5" height="3" fill="#fff"/><rect x="121" y="4" width="3.5" height="3" fill="#fff"/><path d="M122.7 3v1M122.7 7v1.5M118 10v-1.5h9v1.5" stroke="#fff" stroke-width="0.8" fill="none"/>
 <rect x="116.5" y="10" width="3" height="3" fill="#fff"/><rect x="121" y="10" width="3" height="3" fill="#fff"/>
 <circle cx="127" cy="10.5" r="2.4" fill="none" stroke="#fff" stroke-width="0.9"/><path d="M128.8 12.3l2 2" stroke="#fff" stroke-width="1.2"/>
</svg>
<div class="t" style="left:384px;top:1.1px;font-size:5.1px;font-weight:bold;color:#f0f0f0;line-height:7px">Assembly:<br>Process:<br>Release Status:</div>
<div class="t" style="left:421.3px;top:1.1px;font-size:5.1px;color:#f0f0f0;line-height:7px">Console Unit - A<br>New Process Example - A<br>Under Construction</div>
<svg style="left:840px;top:5px" width="52" height="16">
 <ellipse cx="7" cy="4.5" rx="3" ry="4" fill="#fff"/><path d="M1.5 14c0-4 2-5.5 5.5-5.5s5.5 1.5 5.5 5.5z" fill="#fff"/>
 <circle cx="12" cy="11" r="3.6" fill="#fff" stroke="#1b3241" stroke-width="0.8"/><path d="M10.5 9.5l3 3M13.5 9.5l-3 3" stroke="#1b3241" stroke-width="0.9"/>
 <path d="M24 11.3h4" stroke="#fff" stroke-width="0.8"/>
 <rect x="33.5" y="9" width="4" height="4" fill="none" stroke="#bbb" stroke-width="0.7"/><path d="M35 9V8h4v4h-1.5" stroke="#bbb" stroke-width="0.7" fill="none"/>
 <path d="M44 9l3.5 3.5M47.5 9L44 12.5" stroke="#ccc" stroke-width="0.7"/>
</svg>

<!-- ===== PAGE CONTENT ===== -->
<div class="t" style="left:162.8px;top:126.6px;font-size:25.4px;font-weight:bold;color:#000;letter-spacing:0px">Placement</div>
<div class="a" style="left:158px;top:168px;width:286px;height:284px;border:1px solid #dcdcdc"></div>
<div class="a" style="left:158px;top:168px;width:286px;height:13px;border:1px solid #7a7a7a;background:#fff"></div>
<div class="t" style="left:282.3px;top:171.8px;font-size:5.3px;color:#333">SMT Auto Place</div>
<div class="a" style="left:159px;top:191px;width:284px;height:1px;background:#e4e4e4"></div>
<div class="a" style="left:159px;top:208px;width:284px;height:1px;background:#e4e4e4"></div>
<div class="a" style="left:159px;top:224px;width:284px;height:1px;background:#e4e4e4"></div>
<div class="a" style="left:159px;top:241px;width:284px;height:1px;background:#e4e4e4"></div>
<div class="a" style="left:159px;top:257px;width:284px;height:1px;background:#e4e4e4"></div>
<div class="a" style="left:159px;top:274px;width:284px;height:1px;background:#e4e4e4"></div>
<div class="a" style="left:159px;top:291px;width:284px;height:1px;background:#e4e4e4"></div>
<div class="a" style="left:159px;top:308px;width:284px;height:1px;background:#e4e4e4"></div>
<div class="a" style="left:159px;top:319px;width:284px;height:1px;background:#e4e4e4"></div>
<div class="a" style="left:186px;top:181px;width:1px;height:138px;background:#e4e4e4"></div>
<div class="a" style="left:241px;top:181px;width:1px;height:138px;background:#e4e4e4"></div>
<div class="a" style="left:281px;top:181px;width:1px;height:138px;background:#e4e4e4"></div>
<div class="a" style="left:345px;top:181px;width:1px;height:138px;background:#e4e4e4"></div>
<div class="a" style="left:367px;top:181px;width:1px;height:138px;background:#e4e4e4"></div>
<div class="t" style="left:160.6px;top:183.9px;font-size:5.4px;color:#454545">Color</div>
<div class="t" style="left:188.6px;top:183.9px;font-size:5.4px;color:#454545">Part Number</div>
<div class="t" style="left:243.6px;top:183.9px;font-size:5.4px;color:#454545">Footprint</div>
<div class="t" style="left:283.6px;top:183.9px;font-size:5.4px;color:#454545">Description</div>
<div class="t" style="left:347.6px;top:183.9px;font-size:5.4px;color:#454545">Qty</div>
<div class="t" style="left:369.6px;top:183.9px;font-size:5.4px;color:#454545">Reference</div>
<div class="a" style="left:161.2px;top:193.1px;width:22.5px;height:13.4px;background:#0ca14a;box-shadow:inset 0 0 0 0.5px rgba(0,0,0,0.12)"></div>
<div class="t" style="left:189.5px;top:194.2px;font-size:5.4px;color:#454545">296-13100-2-ND</div>
<div class="t" style="left:283.8px;top:194.2px;font-size:5.4px;color:#454545;line-height:7.1px;letter-spacing:-0.2px">IC DRVR/RCVR MLTCH<br>RS232 16TSSOP</div>
<div class="t" style="left:360px;width:6.3px;text-align:right;top:194.2px;font-size:5.4px;color:#454545">1</div>
<div class="t" style="left:370px;top:194.2px;font-size:5.4px;color:#454545">U18</div>
<div class="a" style="left:161.2px;top:210.1px;width:22.5px;height:13.4px;background:#0eaaea;box-shadow:inset 0 0 0 0.5px rgba(0,0,0,0.12)"></div>
<div class="t" style="left:189.5px;top:211.2px;font-size:5.4px;color:#454545">296-16843-2-ND</div>
<div class="t" style="left:283.8px;top:211.2px;font-size:5.4px;color:#454545;line-height:7.1px;letter-spacing:-0.2px">IC BUS TRANSCVR TRI-<br>ST SOT236</div>
<div class="t" style="left:360px;width:6.3px;text-align:right;top:211.2px;font-size:5.4px;color:#454545">3</div>
<div class="t" style="left:370px;top:211.2px;font-size:5.4px;color:#454545">U4, U13, U22</div>
<div class="a" style="left:161.2px;top:226.1px;width:22.5px;height:13.4px;background:#e5007d;box-shadow:inset 0 0 0 0.5px rgba(0,0,0,0.12)"></div>
<div class="t" style="left:189.5px;top:227.2px;font-size:5.4px;color:#454545">296-17014-2-ND</div>
<div class="t" style="left:283.8px;top:227.2px;font-size:5.4px;color:#454545;line-height:7.1px;letter-spacing:-0.2px">IC BUS TRANSCVR 2B N-<br>INV 8VSSOP</div>
<div class="t" style="left:360px;width:6.3px;text-align:right;top:227.2px;font-size:5.4px;color:#454545">2</div>
<div class="t" style="left:370px;top:227.2px;font-size:5.4px;color:#454545">U19-U20</div>
<div class="a" style="left:161.2px;top:243.1px;width:22.5px;height:13.4px;background:#f39477;box-shadow:inset 0 0 0 0.5px rgba(0,0,0,0.12)"></div>
<div class="t" style="left:189.5px;top:244.2px;font-size:5.4px;color:#454545">296-21716-5-ND</div>
<div class="t" style="left:283.8px;top:244.2px;font-size:5.4px;color:#454545;line-height:7.1px;letter-spacing:-0.2px">IC TOUCH SCREEN<br>CTRLR 16-TSSO</div>
<div class="t" style="left:360px;width:6.3px;text-align:right;top:244.2px;font-size:5.4px;color:#454545">1</div>
<div class="t" style="left:370px;top:244.2px;font-size:5.4px;color:#454545">U7</div>
<div class="a" style="left:161.2px;top:259.1px;width:22.5px;height:13.4px;background:#3db571;box-shadow:inset 0 0 0 0.5px rgba(0,0,0,0.12)"></div>
<div class="t" style="left:189.5px;top:260.2px;font-size:5.4px;color:#454545">296-23011-2-N</div>
<div class="t" style="left:283.8px;top:260.2px;font-size:5.4px;color:#454545;line-height:7.1px;letter-spacing:-0.2px">IC 8BIT NON-INV<br>TRANSLTR 20TSSOP</div>
<div class="t" style="left:360px;width:6.3px;text-align:right;top:260.2px;font-size:5.4px;color:#454545">1</div>
<div class="t" style="left:370px;top:260.2px;font-size:5.4px;color:#454545">U21</div>
<div class="a" style="left:161.2px;top:276.1px;width:22.5px;height:13.4px;background:#1db7ad;box-shadow:inset 0 0 0 0.5px rgba(0,0,0,0.12)"></div>
<div class="t" style="left:189.5px;top:277.2px;font-size:5.4px;color:#454545">296-23279-2-ND</div>
<div class="t" style="left:283.8px;top:277.2px;font-size:5.4px;color:#454545;line-height:7.1px;letter-spacing:-0.2px">IC BUS TRANSCVR 8BIT<br>24QSOP</div>
<div class="t" style="left:360px;width:6.3px;text-align:right;top:277.2px;font-size:5.4px;color:#454545">4</div>
<div class="t" style="left:370px;top:277.2px;font-size:5.4px;color:#454545">U6, U8-U9, U11</div>
<div class="a" style="left:161.2px;top:293.1px;width:22.5px;height:13.4px;background:#ee6aa7;box-shadow:inset 0 0 0 0.5px rgba(0,0,0,0.12)"></div>
<div class="t" style="left:189.5px;top:294.2px;font-size:5.4px;color:#454545">296-26876-2-ND</div>
<div class="t" style="left:283.8px;top:294.2px;font-size:5.4px;color:#454545;line-height:7.1px;letter-spacing:-0.2px">IC AMP AUDIO PWR<br>1.45W D 8MSOP</div>
<div class="t" style="left:360px;width:6.3px;text-align:right;top:294.2px;font-size:5.4px;color:#454545">1</div>
<div class="t" style="left:370px;top:294.2px;font-size:5.4px;color:#454545">U5</div>
<div class="a" style="left:161.2px;top:310.1px;width:22.5px;height:9.5px;background:#f26522;box-shadow:inset 0 0 0 0.5px rgba(0,0,0,0.12)"></div>
<div class="t" style="left:189.5px;top:311.2px;font-size:5.4px;color:#454545">311-1.00HRTR-ND</div>
<div class="t" style="left:283.8px;top:311.2px;font-size:5.4px;color:#454545;line-height:7.1px;letter-spacing:-0.2px">Resistor, 1%</div>
<div class="t" style="left:360px;width:6.3px;text-align:right;top:311.2px;font-size:5.4px;color:#454545">1</div>
<div class="t" style="left:370px;top:311.2px;font-size:5.4px;color:#454545">R4</div>
<div class="t" style="left:450px;top:416.8px;font-size:12.1px;color:#222">Inspect and validate parts per color-coding</div>

<!-- logos -->
<svg style="left:750px;top:120px" width="90" height="45">
 <circle cx="17.5" cy="21.2" r="12" fill="none" stroke="#13a23c" stroke-width="2.7"/>
 <text x="9.8" y="27.4" font-family="Liberation Sans" font-size="17" fill="#111" textLength="17.5" lengthAdjust="spacingAndGlyphs">Pb</text>
 <path d="M8.8 12.3L26.5 30.2" stroke="#13a23c" stroke-width="2.5"/>
 <path d="M25.5 34.5c0.5-6 4.5-9.5 10.5-9.5-0.5 6-4.5 9.5-10.5 9.5z" fill="#2aa84a"/><path d="M26.5 33.5l7.5-6.5" stroke="#e8f8e8" stroke-width="0.5"/>
 <text x="8.2" y="39.6" font-family="Liberation Sans" font-size="4.8" font-weight="bold" fill="#000" textLength="19" lengthAdjust="spacingAndGlyphs">lead-free</text>
 <rect x="44" y="5.2" width="36" height="35.8" fill="#f7cb15"/>
 <path d="M62.2 7.2L52.8 22.2h18.8z" fill="#151515"/>
 <path d="M58.5 22.2l2-5.5 1.8 1 1.2-2.8 3.2 1.8 2.8 5.5z" fill="#f7cb15"/>
 <path d="M59.5 21l1.4-3.8 1.5 0.8 1-2.2 2.2 1.4 2.3 3.8z" fill="#151515"/>
 <circle cx="60.2" cy="17.8" r="1.3" fill="none" stroke="#f7cb15" stroke-width="0.5"/>
 <text x="62" y="27.5" text-anchor="middle" font-family="Liberation Sans" font-size="4.5" font-weight="bold" fill="#111" textLength="30" lengthAdjust="spacingAndGlyphs">ATTENTION</text>
 <path d="M49.5 29.6h25M52.5 31.2h19" stroke="#6a5a10" stroke-width="0.45" stroke-dasharray="1.2 0.4"/>
 <path d="M52 33.4h20" stroke="#6a5a10" stroke-width="0.45" stroke-dasharray="1 0.3"/>
 <path d="M56.5 35.6h11M57.5 37.8h9" stroke="#3a3000" stroke-width="0.7" stroke-dasharray="1.3 0.3"/>
</svg>
<!-- AEGIS logo -->
<svg style="left:688px;top:418px" width="100" height="36">
 <text x="3.5" y="24.7" font-family="Liberation Sans" font-size="12.9" fill="#231f20" stroke="#231f20" stroke-width="0.45" textLength="61.5" lengthAdjust="spacingAndGlyphs">AEGIS</text>
 <text x="3.5" y="32.5" font-family="Liberation Sans" font-size="4.2" fill="#6d6e71" textLength="80" lengthAdjust="spacing">SOFTWARE</text>
 <path d="M68.3 13.3L80.3 3.3 92 13.3 80.3 23.3z" fill="#e8403a"/>
 <path d="M80.3 4.3L90.8 13.3 87 16.5 83 12.3 80.3 15.5z" fill="#fff"/>
</svg>

<!-- PCB -->
<svg style="left:452px;top:203px" width="400" height="190">
<rect x="5.5" y="8.5" width="12.0" height="12.0" fill="none" stroke="#e6e6e6" stroke-width="0.6"/>
<rect x="22.5" y="4.5" width="9.5" height="13.5" fill="none" stroke="#e6e6e6" stroke-width="0.6"/>
<rect x="38.5" y="19.0" width="9.0" height="9.5" fill="none" stroke="#e6e6e6" stroke-width="0.6"/>
<rect x="51.5" y="13.0" width="10.3" height="11.4" fill="none" stroke="#e6e6e6" stroke-width="0.6"/>
<rect x="64.0" y="13.0" width="11.0" height="11.4" fill="none" stroke="#e6e6e6" stroke-width="0.6"/>
<rect x="76.0" y="11.0" width="75.7" height="12.8" fill="none" stroke="#e6e6e6" stroke-width="0.6"/>
<rect x="163.0" y="8.5" width="8.0" height="5.0" fill="none" stroke="#e6e6e6" stroke-width="0.6"/>
<rect x="188.0" y="6.0" width="17.0" height="10.0" fill="none" stroke="#e6e6e6" stroke-width="0.6"/>
<rect x="269.5" y="8.5" width="13.5" height="8.5" fill="none" stroke="#e6e6e6" stroke-width="0.6"/>
<rect x="269.0" y="33.0" width="12.0" height="5.0" fill="none" stroke="#e6e6e6" stroke-width="0.6"/>
<rect x="376.5" y="8.5" width="12.0" height="11.5" fill="none" stroke="#e6e6e6" stroke-width="0.6"/>
<rect x="5.0" y="28.0" width="5.0" height="5.0" fill="none" stroke="#e6e6e6" stroke-width="0.6"/>
<rect x="187.5" y="34.5" width="21.5" height="18.0" fill="none" stroke="#e6e6e6" stroke-width="0.6"/>
<rect x="3.0" y="40.0" width="9.0" height="14.0" fill="none" stroke="#e6e6e6" stroke-width="0.6"/>
<rect x="12.4" y="63.0" width="20.1" height="22.6" fill="none" stroke="#e6e6e6" stroke-width="0.6"/>
<rect x="38.0" y="62.0" width="24.0" height="23.5" fill="none" stroke="#e6e6e6" stroke-width="0.6"/>
<rect x="68.0" y="62.0" width="24.0" height="23.5" fill="none" stroke="#e6e6e6" stroke-width="0.6"/>
<rect x="99.0" y="62.0" width="24.0" height="23.5" fill="none" stroke="#e6e6e6" stroke-width="0.6"/>
<rect x="129.0" y="62.0" width="24.0" height="23.5" fill="none" stroke="#e6e6e6" stroke-width="0.6"/>
<rect x="176.0" y="57.5" width="11.0" height="14.0" fill="none" stroke="#e6e6e6" stroke-width="0.6"/>
<rect x="180.0" y="73.5" width="7.0" height="14.5" fill="none" stroke="#e6e6e6" stroke-width="0.6"/>
<rect x="188.5" y="62.0" width="15.5" height="22.0" fill="none" stroke="#e6e6e6" stroke-width="0.6"/>
<rect x="242.0" y="85.0" width="15.0" height="9.0" fill="none" stroke="#e6e6e6" stroke-width="0.6"/>
<rect x="298.0" y="51.0" width="15.0" height="14.0" fill="none" stroke="#e6e6e6" stroke-width="0.6"/>
<rect x="270.0" y="50.0" width="29.0" height="15.0" fill="none" stroke="#e6e6e6" stroke-width="0.6"/>
<rect x="338.0" y="53.0" width="10.0" height="16.0" fill="none" stroke="#e6e6e6" stroke-width="0.6"/>
<rect x="365.0" y="44.0" width="9.0" height="13.0" fill="none" stroke="#e6e6e6" stroke-width="0.6"/>
<rect x="375.0" y="50.0" width="11.0" height="20.0" fill="none" stroke="#e6e6e6" stroke-width="0.6"/>
<rect x="325.0" y="86.5" width="10.0" height="6.0" fill="none" stroke="#e6e6e6" stroke-width="0.6"/>
<rect x="346.0" y="81.0" width="17.0" height="16.0" fill="none" stroke="#e6e6e6" stroke-width="0.6"/>
<rect x="376.0" y="77.0" width="11.0" height="15.0" fill="none" stroke="#e6e6e6" stroke-width="0.6"/>
<rect x="345.0" y="103.0" width="22.0" height="18.0" fill="none" stroke="#e6e6e6" stroke-width="0.6"/>
<rect x="147.5" y="122.0" width="5.5" height="8.0" fill="none" stroke="#e6e6e6" stroke-width="0.6"/>
<rect x="185.0" y="147.0" width="26.5" height="27.0" fill="none" stroke="#e6e6e6" stroke-width="0.6"/>
<rect x="225.0" y="147.0" width="11.0" height="11.0" fill="none" stroke="#e6e6e6" stroke-width="0.6"/>
<rect x="236.0" y="119.5" width="6.5" height="9.5" fill="none" stroke="#e6e6e6" stroke-width="0.6"/>
<rect x="289.0" y="101.0" width="15.5" height="22.0" fill="none" stroke="#e6e6e6" stroke-width="0.6"/>
<rect x="349.5" y="123.5" width="23.5" height="19.5" fill="none" stroke="#e6e6e6" stroke-width="0.6"/>
<rect x="352.0" y="171.5" width="13.0" height="8.5" fill="none" stroke="#e6e6e6" stroke-width="0.6"/>
<rect x="23.7" y="5.5" width="7.3" height="11.0" fill="#bdbdbd"/>
<rect x="33.8" y="11.0" width="2.7" height="2.8" fill="#bdbdbd"/>
<rect x="33.8" y="15.5" width="2.7" height="2.5" fill="#bdbdbd"/>
<rect x="41.0" y="15.5" width="2.7" height="2.5" fill="#bdbdbd"/>
<rect x="45.0" y="15.5" width="2.7" height="2.5" fill="#bdbdbd"/>
<rect x="29.0" y="20.0" width="2.7" height="3.0" fill="#bdbdbd"/>
<rect x="34.0" y="20.0" width="2.7" height="3.0" fill="#bdbdbd"/>
<rect x="29.0" y="25.0" width="2.7" height="3.0" fill="#bdbdbd"/>
<rect x="34.0" y="25.0" width="2.7" height="3.0" fill="#bdbdbd"/>
<rect x="39.5" y="20.0" width="2.7" height="3.0" fill="#bdbdbd"/>
<rect x="44.0" y="20.0" width="2.7" height="3.0" fill="#bdbdbd"/>
<rect x="39.5" y="24.5" width="2.7" height="3.0" fill="#bdbdbd"/>
<rect x="44.0" y="24.5" width="2.7" height="3.0" fill="#bdbdbd"/>
<rect x="20.0" y="24.0" width="2.7" height="3.0" fill="#bdbdbd"/>
<rect x="24.5" y="24.0" width="2.7" height="3.0" fill="#bdbdbd"/>
<rect x="35.0" y="31.0" width="2.7" height="2.8" fill="#bdbdbd"/>
<rect x="41.0" y="31.0" width="2.7" height="2.8" fill="#bdbdbd"/>
<rect x="45.0" y="31.0" width="2.7" height="2.8" fill="#bdbdbd"/>
<rect x="35.0" y="35.0" width="2.7" height="2.5" fill="#bdbdbd"/>
<rect x="18.0" y="35.0" width="2.7" height="3.0" fill="#bdbdbd"/>
<rect x="22.0" y="35.0" width="2.7" height="3.0" fill="#bdbdbd"/>
<rect x="55.0" y="14.5" width="3.0" height="3.0" fill="#bdbdbd"/>
<rect x="53.0" y="20.5" width="2.7" height="2.5" fill="#bdbdbd"/>
<rect x="57.5" y="20.5" width="2.7" height="2.5" fill="#bdbdbd"/>
<rect x="67.5" y="14.5" width="3.0" height="3.0" fill="#bdbdbd"/>
<rect x="65.5" y="20.5" width="2.7" height="2.5" fill="#bdbdbd"/>
<rect x="70.0" y="20.5" width="2.7" height="2.5" fill="#bdbdbd"/>
<rect x="65.5" y="25.0" width="2.7" height="3.0" fill="#bdbdbd"/>
<rect x="69.5" y="25.0" width="2.7" height="3.0" fill="#bdbdbd"/>
<rect x="82.0" y="11.5" width="3.0" height="2.3" fill="#bdbdbd"/>
<rect x="85.8" y="11.5" width="3.0" height="2.3" fill="#bdbdbd"/>
<rect x="89.5" y="11.5" width="3.0" height="2.3" fill="#bdbdbd"/>
<rect x="93.2" y="11.5" width="3.0" height="2.3" fill="#bdbdbd"/>
<rect x="97.0" y="11.5" width="3.0" height="2.3" fill="#bdbdbd"/>
<rect x="100.8" y="11.5" width="3.0" height="2.3" fill="#bdbdbd"/>
<rect x="104.5" y="11.5" width="3.0" height="2.3" fill="#bdbdbd"/>
<rect x="108.2" y="11.5" width="3.0" height="2.3" fill="#bdbdbd"/>
<rect x="112.0" y="11.5" width="3.0" height="2.3" fill="#bdbdbd"/>
<rect x="115.8" y="11.5" width="3.0" height="2.3" fill="#bdbdbd"/>
<rect x="119.5" y="11.5" width="3.0" height="2.3" fill="#bdbdbd"/>
<rect x="123.2" y="11.5" width="3.0" height="2.3" fill="#bdbdbd"/>
<rect x="127.0" y="11.5" width="3.0" height="2.3" fill="#bdbdbd"/>
<rect x="130.8" y="11.5" width="3.0" height="2.3" fill="#bdbdbd"/>
<rect x="134.5" y="11.5" width="3.0" height="2.3" fill="#bdbdbd"/>
<rect x="138.2" y="11.5" width="3.0" height="2.3" fill="#bdbdbd"/>
<rect x="142.0" y="11.5" width="3.0" height="2.3" fill="#bdbdbd"/>
<rect x="76.5" y="19.0" width="3.5" height="5.0" fill="#bdbdbd"/>
<rect x="147.0" y="19.0" width="4.0" height="5.0" fill="#bdbdbd"/>
<rect x="156.0" y="16.0" width="8.0" height="2.0" fill="#bdbdbd"/>
<rect x="170.0" y="16.0" width="8.0" height="2.0" fill="#bdbdbd"/>
<rect x="156.0" y="19.5" width="8.0" height="2.0" fill="#bdbdbd"/>
<rect x="170.0" y="19.5" width="8.0" height="2.0" fill="#bdbdbd"/>
<rect x="156.0" y="23.0" width="8.0" height="2.0" fill="#bdbdbd"/>
<rect x="170.0" y="23.0" width="8.0" height="2.0" fill="#bdbdbd"/>
<rect x="156.0" y="26.3" width="8.0" height="2.0" fill="#bdbdbd"/>
<rect x="170.0" y="26.3" width="8.0" height="2.0" fill="#bdbdbd"/>
<rect x="164.0" y="9.5" width="2.5" height="3.0" fill="#bdbdbd"/>
<rect x="167.5" y="9.5" width="2.5" height="3.0" fill="#bdbdbd"/>
<rect x="191.0" y="6.5" width="2.5" height="2.3" fill="#bdbdbd"/>
<rect x="194.0" y="6.5" width="2.5" height="2.3" fill="#bdbdbd"/>
<rect x="197.0" y="6.5" width="2.5" height="2.3" fill="#bdbdbd"/>
<rect x="200.0" y="6.5" width="2.5" height="2.3" fill="#bdbdbd"/>
<rect x="188.5" y="13.0" width="1.0" height="3.0" fill="#bdbdbd"/>
<rect x="203.5" y="13.0" width="1.0" height="3.0" fill="#bdbdbd"/>
<rect x="270.6" y="9.4" width="11.4" height="6.6" fill="#bdbdbd"/>
<rect x="270.0" y="34.0" width="3.0" height="3.0" fill="#bdbdbd"/>
<rect x="276.5" y="34.0" width="3.0" height="3.0" fill="#bdbdbd"/>
<rect x="180.0" y="36.5" width="3.0" height="2.0" fill="#bdbdbd"/>
<rect x="180.0" y="41.0" width="3.0" height="2.0" fill="#bdbdbd"/>
<rect x="189.0" y="36.0" width="3.0" height="2.2" fill="#bdbdbd"/>
<rect x="194.0" y="36.0" width="3.0" height="2.2" fill="#bdbdbd"/>
<rect x="199.0" y="36.0" width="3.0" height="2.2" fill="#bdbdbd"/>
<rect x="205.0" y="36.0" width="3.0" height="2.2" fill="#bdbdbd"/>
<rect x="189.0" y="40.5" width="3.0" height="2.2" fill="#bdbdbd"/>
<rect x="194.0" y="40.5" width="3.0" height="2.2" fill="#bdbdbd"/>
<rect x="199.0" y="40.5" width="3.0" height="2.2" fill="#bdbdbd"/>
<rect x="205.0" y="40.5" width="3.0" height="2.2" fill="#bdbdbd"/>
<rect x="189.0" y="45.0" width="3.0" height="2.2" fill="#bdbdbd"/>
<rect x="194.0" y="45.0" width="3.0" height="2.2" fill="#bdbdbd"/>
<rect x="199.0" y="45.0" width="3.0" height="2.2" fill="#bdbdbd"/>
<rect x="205.0" y="45.0" width="3.0" height="2.2" fill="#bdbdbd"/>
<rect x="189.0" y="49.0" width="3.0" height="2.2" fill="#bdbdbd"/>
<rect x="194.0" y="49.0" width="3.0" height="2.2" fill="#bdbdbd"/>
<rect x="199.0" y="49.0" width="3.0" height="2.2" fill="#bdbdbd"/>
<rect x="205.0" y="49.0" width="3.0" height="2.2" fill="#bdbdbd"/>
<rect x="180.0" y="54.0" width="2.7" height="3.0" fill="#bdbdbd"/>
<rect x="183.5" y="54.0" width="2.7" height="3.0" fill="#bdbdbd"/>
<rect x="229.0" y="44.5" width="2.7" height="3.0" fill="#bdbdbd"/>
<rect x="233.0" y="44.5" width="2.7" height="3.0" fill="#bdbdbd"/>
<rect x="4.0" y="41.0" width="7.0" height="12.0" fill="#bdbdbd"/>
<rect x="15.0" y="42.0" width="2.3" height="3.0" fill="#0ea5e9"/>
<rect x="18.0" y="42.0" width="2.3" height="3.0" fill="#0ea5e9"/>
<rect x="21.0" y="42.0" width="2.3" height="3.0" fill="#0ea5e9"/>
<rect x="15.0" y="49.0" width="2.3" height="3.0" fill="#0ea5e9"/>
<rect x="18.0" y="49.0" width="2.3" height="3.0" fill="#0ea5e9"/>
<rect x="21.0" y="49.0" width="2.3" height="3.0" fill="#0ea5e9"/>
<rect x="17.0" y="54.0" width="2.7" height="3.0" fill="#bdbdbd"/>
<rect x="21.0" y="54.0" width="2.7" height="3.0" fill="#bdbdbd"/>
<rect x="14.0" y="63.3" width="18.0" height="5.2" fill="#2db56a"/>
<rect x="14.0" y="80.0" width="18.0" height="5.0" fill="#2db56a"/>
<rect x="8.0" y="70.0" width="3.0" height="2.5" fill="#bdbdbd"/>
<rect x="8.0" y="74.0" width="3.0" height="3.0" fill="#bdbdbd"/>
<rect x="34.0" y="71.0" width="3.0" height="2.5" fill="#bdbdbd"/>
<rect x="34.0" y="75.0" width="3.0" height="2.5" fill="#bdbdbd"/>
<rect x="39.0" y="63.5" width="21.5" height="5.5" fill="#52c6be"/>
<rect x="39.0" y="78.0" width="21.5" height="6.0" fill="#52c6be"/>
<rect x="39.6" y="63.5" width="0.7" height="5.5" fill="#16ada4"/>
<rect x="39.6" y="78.0" width="0.7" height="6.0" fill="#16ada4"/>
<rect x="41.0" y="63.5" width="0.7" height="5.5" fill="#16ada4"/>
<rect x="41.0" y="78.0" width="0.7" height="6.0" fill="#16ada4"/>
<rect x="42.4" y="63.5" width="0.7" height="5.5" fill="#16ada4"/>
<rect x="42.4" y="78.0" width="0.7" height="6.0" fill="#16ada4"/>
<rect x="43.8" y="63.5" width="0.7" height="5.5" fill="#16ada4"/>
<rect x="43.8" y="78.0" width="0.7" height="6.0" fill="#16ada4"/>
<rect x="48.0" y="63.5" width="0.7" height="5.5" fill="#16ada4"/>
<rect x="48.0" y="78.0" width="0.7" height="6.0" fill="#16ada4"/>
<rect x="49.4" y="63.5" width="0.7" height="5.5" fill="#16ada4"/>
<rect x="49.4" y="78.0" width="0.7" height="6.0" fill="#16ada4"/>
<rect x="50.8" y="63.5" width="0.7" height="5.5" fill="#16ada4"/>
<rect x="50.8" y="78.0" width="0.7" height="6.0" fill="#16ada4"/>
<rect x="53.6" y="63.5" width="0.7" height="5.5" fill="#16ada4"/>
<rect x="53.6" y="78.0" width="0.7" height="6.0" fill="#16ada4"/>
<rect x="55.0" y="63.5" width="0.7" height="5.5" fill="#16ada4"/>
<rect x="55.0" y="78.0" width="0.7" height="6.0" fill="#16ada4"/>
<rect x="56.4" y="63.5" width="0.7" height="5.5" fill="#16ada4"/>
<rect x="56.4" y="78.0" width="0.7" height="6.0" fill="#16ada4"/>
<rect x="57.8" y="63.5" width="0.7" height="5.5" fill="#16ada4"/>
<rect x="57.8" y="78.0" width="0.7" height="6.0" fill="#16ada4"/>
<rect x="59.2" y="63.5" width="0.7" height="5.5" fill="#16ada4"/>
<rect x="59.2" y="78.0" width="0.7" height="6.0" fill="#16ada4"/>
<rect x="69.0" y="63.5" width="21.5" height="5.5" fill="#52c6be"/>
<rect x="69.0" y="78.0" width="21.5" height="6.0" fill="#52c6be"/>
<rect x="69.6" y="63.5" width="0.7" height="5.5" fill="#16ada4"/>
<rect x="69.6" y="78.0" width="0.7" height="6.0" fill="#16ada4"/>
<rect x="71.0" y="63.5" width="0.7" height="5.5" fill="#16ada4"/>
<rect x="71.0" y="78.0" width="0.7" height="6.0" fill="#16ada4"/>
<rect x="72.4" y="63.5" width="0.7" height="5.5" fill="#16ada4"/>
<rect x="72.4" y="78.0" width="0.7" height="6.0" fill="#16ada4"/>
<rect x="73.8" y="63.5" width="0.7" height="5.5" fill="#16ada4"/>
<rect x="73.8" y="78.0" width="0.7" height="6.0" fill="#16ada4"/>
<rect x="78.0" y="63.5" width="0.7" height="5.5" fill="#16ada4"/>
<rect x="78.0" y="78.0" width="0.7" height="6.0" fill="#16ada4"/>
<rect x="79.4" y="63.5" width="0.7" height="5.5" fill="#16ada4"/>
<rect x="79.4" y="78.0" width="0.7" height="6.0" fill="#16ada4"/>
<rect x="80.8" y="63.5" width="0.7" height="5.5" fill="#16ada4"/>
<rect x="80.8" y="78.0" width="0.7" height="6.0" fill="#16ada4"/>
<rect x="83.6" y="63.5" width="0.7" height="5.5" fill="#16ada4"/>
<rect x="83.6" y="78.0" width="0.7" height="6.0" fill="#16ada4"/>
<rect x="85.0" y="63.5" width="0.7" height="5.5" fill="#16ada4"/>
<rect x="85.0" y="78.0" width="0.7" height="6.0" fill="#16ada4"/>
<rect x="86.4" y="63.5" width="0.7" height="5.5" fill="#16ada4"/>
<rect x="86.4" y="78.0" width="0.7" height="6.0" fill="#16ada4"/>
<rect x="87.8" y="63.5" width="0.7" height="5.5" fill="#16ada4"/>
<rect x="87.8" y="78.0" width="0.7" height="6.0" fill="#16ada4"/>
<rect x="89.2" y="63.5" width="0.7" height="5.5" fill="#16ada4"/>
<rect x="89.2" y="78.0" width="0.7" height="6.0" fill="#16ada4"/>
<rect x="100.0" y="63.5" width="21.5" height="5.5" fill="#52c6be"/>
<rect x="100.0" y="78.0" width="21.5" height="6.0" fill="#52c6be"/>
<rect x="100.6" y="63.5" width="0.7" height="5.5" fill="#16ada4"/>
<rect x="100.6" y="78.0" width="0.7" height="6.0" fill="#16ada4"/>
<rect x="102.0" y="63.5" width="0.7" height="5.5" fill="#16ada4"/>
<rect x="102.0" y="78.0" width="0.7" height="6.0" fill="#16ada4"/>
<rect x="103.4" y="63.5" width="0.7" height="5.5" fill="#16ada4"/>
<rect x="103.4" y="78.0" width="0.7" height="6.0" fill="#16ada4"/>
<rect x="104.8" y="63.5" width="0.7" height="5.5" fill="#16ada4"/>
<rect x="104.8" y="78.0" width="0.7" height="6.0" fill="#16ada4"/>
<rect x="109.0" y="63.5" width="0.7" height="5.5" fill="#16ada4"/>
<rect x="109.0" y="78.0" width="0.7" height="6.0" fill="#16ada4"/>
<rect x="110.4" y="63.5" width="0.7" height="5.5" fill="#16ada4"/>
<rect x="110.4" y="78.0" width="0.7" height="6.0" fill="#16ada4"/>
<rect x="111.8" y="63.5" width="0.7" height="5.5" fill="#16ada4"/>
<rect x="111.8" y="78.0" width="0.7" height="6.0" fill="#16ada4"/>
<rect x="114.6" y="63.5" width="0.7" height="5.5" fill="#16ada4"/>
<rect x="114.6" y="78.0" width="0.7" height="6.0" fill="#16ada4"/>
<rect x="116.0" y="63.5" width="0.7" height="5.5" fill="#16ada4"/>
<rect x="116.0" y="78.0" width="0.7" height="6.0" fill="#16ada4"/>
<rect x="117.4" y="63.5" width="0.7" height="5.5" fill="#16ada4"/>
<rect x="117.4" y="78.0" width="0.7" height="6.0" fill="#16ada4"/>
<rect x="118.8" y="63.5" width="0.7" height="5.5" fill="#16ada4"/>
<rect x="118.8" y="78.0" width="0.7" height="6.0" fill="#16ada4"/>
<rect x="120.2" y="63.5" width="0.7" height="5.5" fill="#16ada4"/>
<rect x="120.2" y="78.0" width="0.7" height="6.0" fill="#16ada4"/>
<rect x="130.0" y="63.5" width="21.5" height="5.5" fill="#52c6be"/>
<rect x="130.0" y="78.0" width="21.5" height="6.0" fill="#52c6be"/>
<rect x="130.6" y="63.5" width="0.7" height="5.5" fill="#16ada4"/>
<rect x="130.6" y="78.0" width="0.7" height="6.0" fill="#16ada4"/>
<rect x="132.0" y="63.5" width="0.7" height="5.5" fill="#16ada4"/>
<rect x="132.0" y="78.0" width="0.7" height="6.0" fill="#16ada4"/>
<rect x="133.4" y="63.5" width="0.7" height="5.5" fill="#16ada4"/>
<rect x="133.4" y="78.0" width="0.7" height="6.0" fill="#16ada4"/>
<rect x="134.8" y="63.5" width="0.7" height="5.5" fill="#16ada4"/>
<rect x="134.8" y="78.0" width="0.7" height="6.0" fill="#16ada4"/>
<rect x="139.0" y="63.5" width="0.7" height="5.5" fill="#16ada4"/>
<rect x="139.0" y="78.0" width="0.7" height="6.0" fill="#16ada4"/>
<rect x="140.4" y="63.5" width="0.7" height="5.5" fill="#16ada4"/>
<rect x="140.4" y="78.0" width="0.7" height="6.0" fill="#16ada4"/>
<rect x="141.8" y="63.5" width="0.7" height="5.5" fill="#16ada4"/>
<rect x="141.8" y="78.0" width="0.7" height="6.0" fill="#16ada4"/>
<rect x="144.6" y="63.5" width="0.7" height="5.5" fill="#16ada4"/>
<rect x="144.6" y="78.0" width="0.7" height="6.0" fill="#16ada4"/>
<rect x="146.0" y="63.5" width="0.7" height="5.5" fill="#16ada4"/>
<rect x="146.0" y="78.0" width="0.7" height="6.0" fill="#16ada4"/>
<rect x="147.4" y="63.5" width="0.7" height="5.5" fill="#16ada4"/>
<rect x="147.4" y="78.0" width="0.7" height="6.0" fill="#16ada4"/>
<rect x="148.8" y="63.5" width="0.7" height="5.5" fill="#16ada4"/>
<rect x="148.8" y="78.0" width="0.7" height="6.0" fill="#16ada4"/>
<rect x="150.2" y="63.5" width="0.7" height="5.5" fill="#16ada4"/>
<rect x="150.2" y="78.0" width="0.7" height="6.0" fill="#16ada4"/>
<rect x="63.5" y="63.0" width="3.0" height="2.3" fill="#bdbdbd"/>
<rect x="63.5" y="67.0" width="3.0" height="2.3" fill="#bdbdbd"/>
<rect x="63.5" y="77.0" width="3.0" height="2.3" fill="#bdbdbd"/>
<rect x="63.5" y="82.0" width="3.0" height="2.3" fill="#bdbdbd"/>
<rect x="94.5" y="63.0" width="3.0" height="2.3" fill="#bdbdbd"/>
<rect x="94.5" y="67.0" width="3.0" height="2.3" fill="#bdbdbd"/>
<rect x="94.5" y="77.0" width="3.0" height="2.3" fill="#bdbdbd"/>
<rect x="94.5" y="82.0" width="3.0" height="2.3" fill="#bdbdbd"/>
<rect x="124.5" y="63.0" width="3.0" height="2.3" fill="#bdbdbd"/>
<rect x="124.5" y="67.0" width="3.0" height="2.3" fill="#bdbdbd"/>
<rect x="124.5" y="77.0" width="3.0" height="2.3" fill="#bdbdbd"/>
<rect x="124.5" y="82.0" width="3.0" height="2.3" fill="#bdbdbd"/>
<rect x="155.0" y="63.0" width="3.0" height="2.3" fill="#bdbdbd"/>
<rect x="155.0" y="67.0" width="3.0" height="2.3" fill="#bdbdbd"/>
<rect x="155.0" y="77.0" width="3.0" height="2.3" fill="#bdbdbd"/>
<rect x="155.0" y="82.0" width="3.0" height="2.3" fill="#bdbdbd"/>
<rect x="178.0" y="59.0" width="2.3" height="3.0" fill="#0ea5e9"/>
<rect x="181.0" y="59.0" width="2.3" height="3.0" fill="#0ea5e9"/>
<rect x="184.0" y="59.0" width="2.3" height="3.0" fill="#0ea5e9"/>
<rect x="178.0" y="66.5" width="2.3" height="3.0" fill="#0ea5e9"/>
<rect x="181.0" y="66.5" width="2.3" height="3.0" fill="#0ea5e9"/>
<rect x="184.0" y="66.5" width="2.3" height="3.0" fill="#0ea5e9"/>
<rect x="180.0" y="55.0" width="2.5" height="2.0" fill="#bdbdbd"/>
<rect x="183.5" y="55.0" width="2.5" height="2.0" fill="#bdbdbd"/>
<rect x="181.5" y="82.0" width="4.0" height="4.0" fill="#bdbdbd"/>
<rect x="189.0" y="62.0" width="15.0" height="5.0" fill="#f4937a"/>
<rect x="189.0" y="78.0" width="15.0" height="5.0" fill="#f4937a"/>
<rect x="205.0" y="66.5" width="7.0" height="11.5" fill="#bdbdbd"/>
<rect x="199.0" y="86.0" width="3.0" height="3.0" fill="#bdbdbd"/>
<rect x="203.0" y="86.0" width="3.0" height="3.0" fill="#bdbdbd"/>
<rect x="218.0" y="58.0" width="3.0" height="3.0" fill="#bdbdbd"/>
<rect x="222.0" y="58.0" width="3.0" height="3.0" fill="#bdbdbd"/>
<rect x="217.0" y="73.0" width="3.0" height="3.0" fill="#bdbdbd"/>
<rect x="221.5" y="73.0" width="3.0" height="3.0" fill="#bdbdbd"/>
<rect x="255.0" y="58.0" width="3.0" height="2.0" fill="#bdbdbd"/>
<rect x="255.0" y="62.5" width="3.0" height="2.0" fill="#bdbdbd"/>
<rect x="255.0" y="67.0" width="3.0" height="2.0" fill="#bdbdbd"/>
<rect x="255.0" y="71.5" width="3.0" height="2.0" fill="#bdbdbd"/>
<rect x="255.0" y="76.0" width="3.0" height="2.0" fill="#bdbdbd"/>
<rect x="255.0" y="80.5" width="3.0" height="2.0" fill="#bdbdbd"/>
<rect x="244.0" y="86.0" width="11.0" height="7.0" fill="#bdbdbd"/>
<rect x="259.0" y="87.0" width="3.0" height="4.0" fill="#bdbdbd"/>
<rect x="263.0" y="87.0" width="3.0" height="4.0" fill="#bdbdbd"/>
<rect x="272.0" y="52.0" width="4.0" height="3.0" fill="#bdbdbd"/>
<rect x="281.0" y="53.0" width="3.0" height="2.5" fill="#bdbdbd"/>
<rect x="284.5" y="53.0" width="3.0" height="2.5" fill="#bdbdbd"/>
<rect x="292.0" y="54.0" width="4.0" height="4.0" fill="#bdbdbd"/>
<rect x="302.5" y="53.0" width="3.5" height="2.0" fill="#bdbdbd"/>
<rect x="272.0" y="58.0" width="4.0" height="4.0" fill="#bdbdbd"/>
<rect x="280.0" y="59.0" width="2.3" height="4.0" fill="#bdbdbd"/>
<rect x="283.0" y="59.0" width="2.3" height="4.0" fill="#bdbdbd"/>
<rect x="286.0" y="59.0" width="2.3" height="4.0" fill="#bdbdbd"/>
<rect x="292.5" y="56.0" width="4.0" height="7.0" fill="#bdbdbd"/>
<rect x="276.0" y="67.0" width="3.0" height="3.0" fill="#bdbdbd"/>
<rect x="279.5" y="67.0" width="3.0" height="3.0" fill="#bdbdbd"/>
<rect x="285.0" y="67.0" width="3.0" height="3.0" fill="#bdbdbd"/>
<rect x="288.5" y="67.0" width="3.0" height="3.0" fill="#bdbdbd"/>
<rect x="329.0" y="55.0" width="2.5" height="2.5" fill="#bdbdbd"/>
<rect x="332.0" y="55.0" width="2.5" height="2.5" fill="#bdbdbd"/>
<rect x="329.0" y="60.0" width="2.5" height="3.0" fill="#bdbdbd"/>
<rect x="332.0" y="60.0" width="2.5" height="3.0" fill="#bdbdbd"/>
<rect x="329.0" y="66.0" width="2.5" height="2.5" fill="#bdbdbd"/>
<rect x="332.0" y="66.0" width="2.5" height="2.5" fill="#bdbdbd"/>
<rect x="340.0" y="58.0" width="2.0" height="3.0" fill="#bdbdbd"/>
<rect x="345.0" y="58.0" width="2.0" height="3.0" fill="#bdbdbd"/>
<rect x="339.0" y="66.0" width="8.0" height="2.5" fill="#bdbdbd"/>
<rect x="337.0" y="72.0" width="4.0" height="4.0" fill="#bdbdbd"/>
<rect x="342.5" y="72.0" width="4.0" height="4.0" fill="#bdbdbd"/>
<rect x="329.0" y="51.0" width="3.0" height="3.0" fill="#bdbdbd"/>
<rect x="335.0" y="51.0" width="3.0" height="3.0" fill="#bdbdbd"/>
<rect x="340.0" y="51.0" width="3.0" height="3.0" fill="#bdbdbd"/>
<rect x="344.0" y="51.0" width="3.0" height="3.0" fill="#bdbdbd"/>
<rect x="366.0" y="45.0" width="7.0" height="11.0" fill="#bdbdbd"/>
<rect x="378.0" y="52.0" width="3.0" height="4.0" fill="#bdbdbd"/>
<rect x="381.5" y="52.0" width="3.0" height="4.0" fill="#bdbdbd"/>
<rect x="367.5" y="60.0" width="3.0" height="5.0" fill="#bdbdbd"/>
<rect x="376.0" y="58.0" width="4.0" height="4.0" fill="#bdbdbd"/>
<rect x="380.5" y="58.0" width="4.0" height="4.0" fill="#bdbdbd"/>
<rect x="376.0" y="65.0" width="4.0" height="4.0" fill="#bdbdbd"/>
<rect x="380.5" y="65.0" width="4.0" height="4.0" fill="#bdbdbd"/>
<rect x="326.0" y="88.0" width="3.0" height="3.0" fill="#f26522"/>
<rect x="330.0" y="88.0" width="3.0" height="3.0" fill="#f26522"/>
<rect x="336.0" y="83.0" width="2.5" height="3.0" fill="#bdbdbd"/>
<rect x="339.5" y="83.0" width="2.5" height="3.0" fill="#bdbdbd"/>
<rect x="336.0" y="88.0" width="4.0" height="4.0" fill="#bdbdbd"/>
<rect x="336.0" y="93.0" width="4.0" height="4.0" fill="#bdbdbd"/>
<rect x="337.0" y="101.0" width="2.5" height="3.0" fill="#bdbdbd"/>
<rect x="340.0" y="101.0" width="2.5" height="3.0" fill="#bdbdbd"/>
<rect x="326.0" y="95.0" width="7.0" height="11.0" fill="#bdbdbd"/>
<rect x="349.0" y="81.5" width="11.0" height="1.5" fill="#bdbdbd"/>
<rect x="349.0" y="95.0" width="11.0" height="1.5" fill="#bdbdbd"/>
<rect x="346.5" y="84.0" width="1.5" height="10.0" fill="#bdbdbd"/>
<rect x="361.0" y="84.0" width="1.5" height="10.0" fill="#bdbdbd"/>
<rect x="366.0" y="87.0" width="2.5" height="3.0" fill="#bdbdbd"/>
<rect x="369.5" y="87.0" width="2.5" height="3.0" fill="#bdbdbd"/>
<rect x="366.0" y="93.0" width="2.5" height="3.0" fill="#bdbdbd"/>
<rect x="369.5" y="93.0" width="2.5" height="3.0" fill="#bdbdbd"/>
<rect x="377.0" y="79.0" width="2.3" height="3.0" fill="#0ea5e9"/>
<rect x="380.0" y="79.0" width="2.3" height="3.0" fill="#0ea5e9"/>
<rect x="383.0" y="79.0" width="2.3" height="3.0" fill="#0ea5e9"/>
<rect x="377.0" y="86.0" width="2.3" height="3.0" fill="#0ea5e9"/>
<rect x="380.0" y="86.0" width="2.3" height="3.0" fill="#0ea5e9"/>
<rect x="383.0" y="86.0" width="2.3" height="3.0" fill="#0ea5e9"/>
<rect x="377.0" y="94.0" width="2.5" height="3.0" fill="#bdbdbd"/>
<rect x="381.0" y="94.0" width="2.5" height="3.0" fill="#bdbdbd"/>
<rect x="331.0" y="108.0" width="12.0" height="7.0" fill="#bdbdbd"/>
<rect x="331.0" y="117.0" width="12.0" height="7.0" fill="#bdbdbd"/>
<rect x="346.5" y="104.5" width="3.0" height="2.6" fill="#bdbdbd"/>
<rect x="351.5" y="104.5" width="3.0" height="2.6" fill="#bdbdbd"/>
<rect x="356.5" y="104.5" width="3.0" height="2.6" fill="#bdbdbd"/>
<rect x="361.5" y="104.5" width="3.0" height="2.6" fill="#bdbdbd"/>
<rect x="346.5" y="108.3" width="3.0" height="2.6" fill="#bdbdbd"/>
<rect x="351.5" y="108.3" width="3.0" height="2.6" fill="#bdbdbd"/>
<rect x="356.5" y="108.3" width="3.0" height="2.6" fill="#bdbdbd"/>
<rect x="361.5" y="108.3" width="3.0" height="2.6" fill="#bdbdbd"/>
<rect x="346.5" y="112.1" width="3.0" height="2.6" fill="#bdbdbd"/>
<rect x="351.5" y="112.1" width="3.0" height="2.6" fill="#bdbdbd"/>
<rect x="356.5" y="112.1" width="3.0" height="2.6" fill="#bdbdbd"/>
<rect x="361.5" y="112.1" width="3.0" height="2.6" fill="#bdbdbd"/>
<rect x="346.5" y="115.9" width="3.0" height="2.6" fill="#bdbdbd"/>
<rect x="351.5" y="115.9" width="3.0" height="2.6" fill="#bdbdbd"/>
<rect x="356.5" y="115.9" width="3.0" height="2.6" fill="#bdbdbd"/>
<rect x="361.5" y="115.9" width="3.0" height="2.6" fill="#bdbdbd"/>
<rect x="373.0" y="115.0" width="11.0" height="7.0" fill="#bdbdbd"/>
<rect x="20.0" y="93.0" width="7.0" height="11.5" fill="#bdbdbd"/>
<rect x="32.5" y="91.0" width="7.0" height="11.5" fill="#bdbdbd"/>
<rect x="18.0" y="106.0" width="7.0" height="11.0" fill="#bdbdbd"/>
<rect x="18.0" y="118.0" width="7.0" height="11.0" fill="#bdbdbd"/>
<rect x="32.5" y="122.0" width="7.0" height="11.0" fill="#bdbdbd"/>
<rect x="56.0" y="106.0" width="7.0" height="11.0" fill="#bdbdbd"/>
<rect x="61.0" y="120.0" width="7.0" height="11.0" fill="#bdbdbd"/>
<rect x="7.5" y="134.0" width="7.0" height="11.0" fill="#bdbdbd"/>
<rect x="11.0" y="160.0" width="11.0" height="7.0" fill="#bdbdbd"/>
<rect x="25.0" y="163.0" width="11.0" height="7.0" fill="#bdbdbd"/>
<rect x="89.5" y="95.0" width="3.0" height="2.5" fill="#bdbdbd"/>
<rect x="89.5" y="100.0" width="3.0" height="2.5" fill="#bdbdbd"/>
<rect x="89.0" y="114.0" width="5.0" height="5.0" fill="#bdbdbd"/>
<rect x="124.0" y="102.0" width="7.0" height="11.0" fill="#bdbdbd"/>
<rect x="129.0" y="116.0" width="7.0" height="12.0" fill="#bdbdbd"/>
<rect x="142.0" y="104.0" width="7.0" height="11.0" fill="#bdbdbd"/>
<rect x="141.5" y="124.0" width="3.0" height="2.5" fill="#bdbdbd"/>
<rect x="141.5" y="128.0" width="3.0" height="2.5" fill="#bdbdbd"/>
<rect x="148.5" y="127.0" width="3.5" height="2.0" fill="#bdbdbd"/>
<rect x="152.5" y="172.0" width="7.5" height="11.5" fill="#bdbdbd"/>
<rect x="167.0" y="172.0" width="7.0" height="11.5" fill="#bdbdbd"/>
<rect x="176.0" y="172.0" width="7.0" height="11.5" fill="#bdbdbd"/>
<rect x="194.0" y="155.0" width="2.0" height="4.0" fill="#bdbdbd"/>
<rect x="197.0" y="155.0" width="2.0" height="4.0" fill="#bdbdbd"/>
<rect x="199.5" y="155.0" width="2.0" height="4.0" fill="#bdbdbd"/>
<rect x="194.0" y="163.0" width="2.0" height="4.0" fill="#bdbdbd"/>
<rect x="197.0" y="163.0" width="2.0" height="4.0" fill="#bdbdbd"/>
<rect x="199.5" y="163.0" width="2.0" height="4.0" fill="#bdbdbd"/>
<rect x="213.5" y="172.0" width="7.0" height="11.0" fill="#bdbdbd"/>
<rect x="223.0" y="174.0" width="3.0" height="3.0" fill="#bdbdbd"/>
<rect x="223.0" y="178.0" width="3.0" height="3.0" fill="#bdbdbd"/>
<rect x="219.0" y="140.0" width="3.0" height="3.0" fill="#bdbdbd"/>
<rect x="219.0" y="144.0" width="3.0" height="3.0" fill="#bdbdbd"/>
<rect x="226.0" y="141.0" width="3.0" height="3.0" fill="#bdbdbd"/>
<rect x="230.0" y="141.0" width="3.0" height="3.0" fill="#bdbdbd"/>
<rect x="235.0" y="131.0" width="7.0" height="11.0" fill="#bdbdbd"/>
<rect x="227.0" y="147.5" width="7.0" height="1.5" fill="#bdbdbd"/>
<rect x="227.0" y="156.0" width="7.0" height="1.5" fill="#bdbdbd"/>
<rect x="225.5" y="150.0" width="1.5" height="6.0" fill="#bdbdbd"/>
<rect x="234.0" y="150.0" width="1.5" height="6.0" fill="#bdbdbd"/>
<rect x="238.0" y="145.5" width="2.5" height="2.5" fill="#bdbdbd"/>
<rect x="241.0" y="145.5" width="2.5" height="2.5" fill="#bdbdbd"/>
<rect x="238.0" y="151.0" width="2.5" height="3.0" fill="#bdbdbd"/>
<rect x="241.0" y="151.0" width="2.5" height="3.0" fill="#bdbdbd"/>
<rect x="226.0" y="160.0" width="3.0" height="2.5" fill="#bdbdbd"/>
<rect x="231.0" y="160.0" width="3.0" height="2.5" fill="#bdbdbd"/>
<rect x="226.0" y="164.0" width="3.0" height="2.5" fill="#bdbdbd"/>
<rect x="231.0" y="164.0" width="3.0" height="2.5" fill="#bdbdbd"/>
<rect x="238.0" y="94.0" width="2.5" height="2.5" fill="#bdbdbd"/>
<rect x="238.0" y="98.0" width="2.5" height="2.5" fill="#bdbdbd"/>
<rect x="253.0" y="102.0" width="4.0" height="5.0" fill="#bdbdbd"/>
<rect x="231.0" y="109.5" width="11.0" height="7.0" fill="#bdbdbd"/>
<rect x="237.0" y="120.5" width="1.6" height="2.0" fill="#bdbdbd"/>
<rect x="239.5" y="120.5" width="1.6" height="2.0" fill="#bdbdbd"/>
<rect x="237.5" y="126.0" width="1.5" height="2.0" fill="#bdbdbd"/>
<rect x="240.0" y="126.0" width="1.5" height="2.0" fill="#bdbdbd"/>
<rect x="244.0" y="122.0" width="3.0" height="2.5" fill="#bdbdbd"/>
<rect x="244.0" y="126.0" width="3.0" height="3.0" fill="#bdbdbd"/>
<rect x="261.0" y="100.8" width="2.6" height="2.7" fill="#bdbdbd"/>
<rect x="264.7" y="100.8" width="2.6" height="2.7" fill="#bdbdbd"/>
<rect x="261.0" y="120.8" width="2.6" height="2.7" fill="#bdbdbd"/>
<rect x="264.7" y="120.8" width="2.6" height="2.7" fill="#bdbdbd"/>
<rect x="261.0" y="107.0" width="6.0" height="3.0" fill="#e6007e"/>
<rect x="261.0" y="115.0" width="6.0" height="3.0" fill="#e6007e"/>
<rect x="275.5" y="100.8" width="2.6" height="2.7" fill="#bdbdbd"/>
<rect x="279.2" y="100.8" width="2.6" height="2.7" fill="#bdbdbd"/>
<rect x="275.5" y="120.8" width="2.6" height="2.7" fill="#bdbdbd"/>
<rect x="279.2" y="120.8" width="2.6" height="2.7" fill="#bdbdbd"/>
<rect x="275.5" y="107.0" width="6.0" height="3.0" fill="#e6007e"/>
<rect x="275.5" y="115.0" width="6.0" height="3.0" fill="#e6007e"/>
<rect x="285.0" y="97.0" width="3.0" height="3.0" fill="#bdbdbd"/>
<rect x="289.0" y="97.0" width="3.0" height="3.0" fill="#bdbdbd"/>
<rect x="289.0" y="101.5" width="15.0" height="5.5" fill="#0ea04a"/>
<rect x="289.0" y="118.0" width="15.0" height="5.0" fill="#0ea04a"/>
<rect x="306.5" y="114.0" width="4.0" height="3.0" fill="#bdbdbd"/>
<rect x="306.5" y="119.0" width="4.0" height="3.0" fill="#bdbdbd"/>
<rect x="287.0" y="128.0" width="3.0" height="3.0" fill="#bdbdbd"/>
<rect x="291.0" y="128.0" width="3.0" height="3.0" fill="#bdbdbd"/>
<rect x="296.0" y="128.0" width="3.0" height="3.0" fill="#bdbdbd"/>
<rect x="300.0" y="128.0" width="3.0" height="3.0" fill="#bdbdbd"/>
<rect x="293.0" y="133.0" width="2.7" height="3.0" fill="#bdbdbd"/>
<rect x="296.5" y="133.0" width="2.7" height="3.0" fill="#bdbdbd"/>
<rect x="357.0" y="125.0" width="8.0" height="5.0" fill="#ef6aa7"/>
<rect x="357.0" y="137.0" width="8.0" height="5.0" fill="#ef6aa7"/>
<rect x="356.0" y="147.0" width="3.0" height="4.0" fill="#bdbdbd"/>
<rect x="359.5" y="147.0" width="3.0" height="4.0" fill="#bdbdbd"/>
<rect x="353.0" y="172.5" width="11.0" height="6.5" fill="#bdbdbd"/>
<circle cx="11.4" cy="14.4" r="5.1" fill="#bdbdbd"/>
<circle cx="149.2" cy="28.4" r="4.3" fill="#bdbdbd"/>
<circle cx="186.4" cy="28.1" r="4.4" fill="#bdbdbd"/>
<circle cx="210.5" cy="14.1" r="3" fill="#bdbdbd"/>
<circle cx="215.3" cy="23.2" r="4.4" fill="#bdbdbd"/>
<circle cx="255.9" cy="14.1" r="3" fill="#bdbdbd"/>
<circle cx="251.0" cy="23.2" r="4.4" fill="#bdbdbd"/>
<circle cx="272.6" cy="27.0" r="3.2" fill="#bdbdbd"/>
<circle cx="286.0" cy="27.0" r="3.2" fill="#bdbdbd"/>
<circle cx="299.4" cy="27.0" r="3.2" fill="#bdbdbd"/>
<circle cx="327.8" cy="8.1" r="3.2" fill="#bdbdbd"/>
<circle cx="327.8" cy="23.5" r="3.2" fill="#bdbdbd"/>
<circle cx="382.4" cy="14.2" r="5" fill="#bdbdbd"/>
<circle cx="217.5" cy="46.2" r="2.2" fill="#bdbdbd"/>
<circle cx="249.0" cy="46.2" r="2.2" fill="#bdbdbd"/>
<circle cx="183.5" cy="77.0" r="2" fill="#bdbdbd"/>
<circle cx="218.9" cy="66.2" r="2" fill="#bdbdbd"/>
<circle cx="224.5" cy="66.2" r="2" fill="#bdbdbd"/>
<circle cx="216.0" cy="80.6" r="2" fill="#bdbdbd"/>
<circle cx="223.0" cy="80.6" r="2" fill="#bdbdbd"/>
<circle cx="241.9" cy="66.2" r="2" fill="#bdbdbd"/>
<circle cx="247.7" cy="66.2" r="2" fill="#bdbdbd"/>
<circle cx="238.8" cy="73.4" r="2" fill="#bdbdbd"/>
<circle cx="244.7" cy="73.4" r="2" fill="#bdbdbd"/>
<circle cx="250.4" cy="73.4" r="2" fill="#bdbdbd"/>
<circle cx="243.2" cy="80.5" r="2" fill="#bdbdbd"/>
<circle cx="250.4" cy="80.5" r="2" fill="#bdbdbd"/>
<circle cx="281.5" cy="80.7" r="2.5" fill="#bdbdbd"/>
<circle cx="288.6" cy="80.7" r="2.5" fill="#bdbdbd"/>
<circle cx="295.9" cy="80.7" r="2.5" fill="#bdbdbd"/>
<circle cx="303.0" cy="80.7" r="2.5" fill="#bdbdbd"/>
<circle cx="310.2" cy="80.7" r="2.5" fill="#bdbdbd"/>
<circle cx="281.5" cy="88.0" r="2.5" fill="#bdbdbd"/>
<circle cx="288.6" cy="88.0" r="2.5" fill="#bdbdbd"/>
<circle cx="295.9" cy="88.0" r="2.5" fill="#bdbdbd"/>
<circle cx="303.0" cy="88.0" r="2.5" fill="#bdbdbd"/>
<circle cx="310.2" cy="88.0" r="2.5" fill="#bdbdbd"/>
<circle cx="310.0" cy="80.7" r="2" fill="#bdbdbd"/>
<circle cx="310.0" cy="88.0" r="2" fill="#bdbdbd"/>
<circle cx="354.8" cy="89.3" r="1.8" fill="#bdbdbd"/>
<circle cx="15.8" cy="152.4" r="2.2" fill="#bdbdbd"/>
<circle cx="11.5" cy="175.0" r="5" fill="#bdbdbd"/>
<circle cx="91.5" cy="109.4" r="2" fill="#bdbdbd"/>
<circle cx="204.5" cy="152.3" r="2.8" fill="#bdbdbd"/>
<circle cx="230.3" cy="152.8" r="1.6" fill="#bdbdbd"/>
<circle cx="231.0" cy="100.6" r="2" fill="#bdbdbd"/>
<circle cx="247.0" cy="100.6" r="2.7" fill="#bdbdbd"/>
<circle cx="255.0" cy="97.0" r="2.3" fill="#bdbdbd"/>
<circle cx="252.7" cy="142.9" r="3.6" fill="#bdbdbd"/>
<circle cx="252.7" cy="179.6" r="3.6" fill="#bdbdbd"/>
<circle cx="340.4" cy="142.8" r="3.5" fill="#bdbdbd"/>
<circle cx="340.4" cy="179.6" r="3.5" fill="#bdbdbd"/>
<circle cx="368.3" cy="155.6" r="2.4" fill="#bdbdbd"/>
<circle cx="368.3" cy="166.8" r="2.4" fill="#bdbdbd"/>
<circle cx="382.5" cy="175.2" r="5" fill="#bdbdbd"/>
<line x1="0.5" y1="3.0" x2="0.5" y2="186.5" stroke="#b0b0b0" stroke-width="1"/>
<line x1="395.5" y1="3.0" x2="395.5" y2="186.5" stroke="#b0b0b0" stroke-width="1"/>
<line x1="0.0" y1="186.5" x2="396.0" y2="186.5" stroke="#b0b0b0" stroke-width="1"/>
<line x1="379.5" y1="27.3" x2="383.7" y2="27.3" stroke="#c8c8c8" stroke-width="0.6"/>
<line x1="381.6" y1="25.2" x2="381.6" y2="29.4" stroke="#c8c8c8" stroke-width="0.6"/>
<line x1="5.5" y1="30.5" x2="9.5" y2="30.5" stroke="#c8c8c8" stroke-width="0.6"/>
<line x1="7.5" y1="28.5" x2="7.5" y2="32.5" stroke="#c8c8c8" stroke-width="0.6"/>
<line x1="12.6" y1="63.0" x2="12.6" y2="85.6" stroke="#555" stroke-width="0.8"/>
<line x1="12.4" y1="85.4" x2="32.5" y2="85.4" stroke="#555" stroke-width="0.8"/>
<line x1="17.0" y1="63.3" x2="17.0" y2="68.5" stroke="#5cc88a" stroke-width="0.4"/>
<line x1="17.0" y1="80.0" x2="17.0" y2="85.0" stroke="#5cc88a" stroke-width="0.4"/>
<line x1="20.2" y1="63.3" x2="20.2" y2="68.5" stroke="#5cc88a" stroke-width="0.4"/>
<line x1="20.2" y1="80.0" x2="20.2" y2="85.0" stroke="#5cc88a" stroke-width="0.4"/>
<line x1="23.4" y1="63.3" x2="23.4" y2="68.5" stroke="#5cc88a" stroke-width="0.4"/>
<line x1="23.4" y1="80.0" x2="23.4" y2="85.0" stroke="#5cc88a" stroke-width="0.4"/>
<line x1="26.6" y1="63.3" x2="26.6" y2="68.5" stroke="#5cc88a" stroke-width="0.4"/>
<line x1="26.6" y1="80.0" x2="26.6" y2="85.0" stroke="#5cc88a" stroke-width="0.4"/>
<line x1="29.8" y1="63.3" x2="29.8" y2="68.5" stroke="#5cc88a" stroke-width="0.4"/>
<line x1="29.8" y1="80.0" x2="29.8" y2="85.0" stroke="#5cc88a" stroke-width="0.4"/>
<line x1="188.7" y1="62.0" x2="188.7" y2="84.0" stroke="#555" stroke-width="0.7"/>
<line x1="188.5" y1="83.8" x2="204.0" y2="83.8" stroke="#555" stroke-width="0.7"/>
<line x1="191.0" y1="62.0" x2="191.0" y2="67.0" stroke="#f8b8a4" stroke-width="0.4"/>
<line x1="191.0" y1="78.0" x2="191.0" y2="83.0" stroke="#f8b8a4" stroke-width="0.4"/>
<line x1="193.4" y1="62.0" x2="193.4" y2="67.0" stroke="#f8b8a4" stroke-width="0.4"/>
<line x1="193.4" y1="78.0" x2="193.4" y2="83.0" stroke="#f8b8a4" stroke-width="0.4"/>
<line x1="195.8" y1="62.0" x2="195.8" y2="67.0" stroke="#f8b8a4" stroke-width="0.4"/>
<line x1="195.8" y1="78.0" x2="195.8" y2="83.0" stroke="#f8b8a4" stroke-width="0.4"/>
<line x1="198.2" y1="62.0" x2="198.2" y2="67.0" stroke="#f8b8a4" stroke-width="0.4"/>
<line x1="198.2" y1="78.0" x2="198.2" y2="83.0" stroke="#f8b8a4" stroke-width="0.4"/>
<line x1="200.6" y1="62.0" x2="200.6" y2="67.0" stroke="#f8b8a4" stroke-width="0.4"/>
<line x1="200.6" y1="78.0" x2="200.6" y2="83.0" stroke="#f8b8a4" stroke-width="0.4"/>
<line x1="203.0" y1="62.0" x2="203.0" y2="67.0" stroke="#f8b8a4" stroke-width="0.4"/>
<line x1="203.0" y1="78.0" x2="203.0" y2="83.0" stroke="#f8b8a4" stroke-width="0.4"/>
<line x1="88.5" y1="93.0" x2="88.5" y2="122.0" stroke="#e4e4e4" stroke-width="0.5"/>
<line x1="267.3" y1="106.5" x2="267.3" y2="118.5" stroke="#555" stroke-width="0.6"/>
<line x1="281.8" y1="106.5" x2="281.8" y2="118.5" stroke="#555" stroke-width="0.6"/>
<line x1="304.5" y1="101.0" x2="304.5" y2="123.0" stroke="#666" stroke-width="0.6"/>
<line x1="246.5" y1="138.0" x2="246.5" y2="184.0" stroke="#e6e6e6" stroke-width="0.6"/>
<line x1="246.5" y1="184.0" x2="375.0" y2="184.0" stroke="#e6e6e6" stroke-width="0.6"/>
<line x1="375.0" y1="138.0" x2="375.0" y2="184.0" stroke="#e6e6e6" stroke-width="0.6"/>
<line x1="379.5" y1="161.5" x2="383.5" y2="161.5" stroke="#c8c8c8" stroke-width="0.6"/>
<line x1="379.5" y1="164.5" x2="383.5" y2="164.5" stroke="#c8c8c8" stroke-width="0.6"/>
<line x1="381.5" y1="160.0" x2="381.5" y2="166.0" stroke="#c8c8c8" stroke-width="0.6"/>
</svg>

</div>
</body></html>
